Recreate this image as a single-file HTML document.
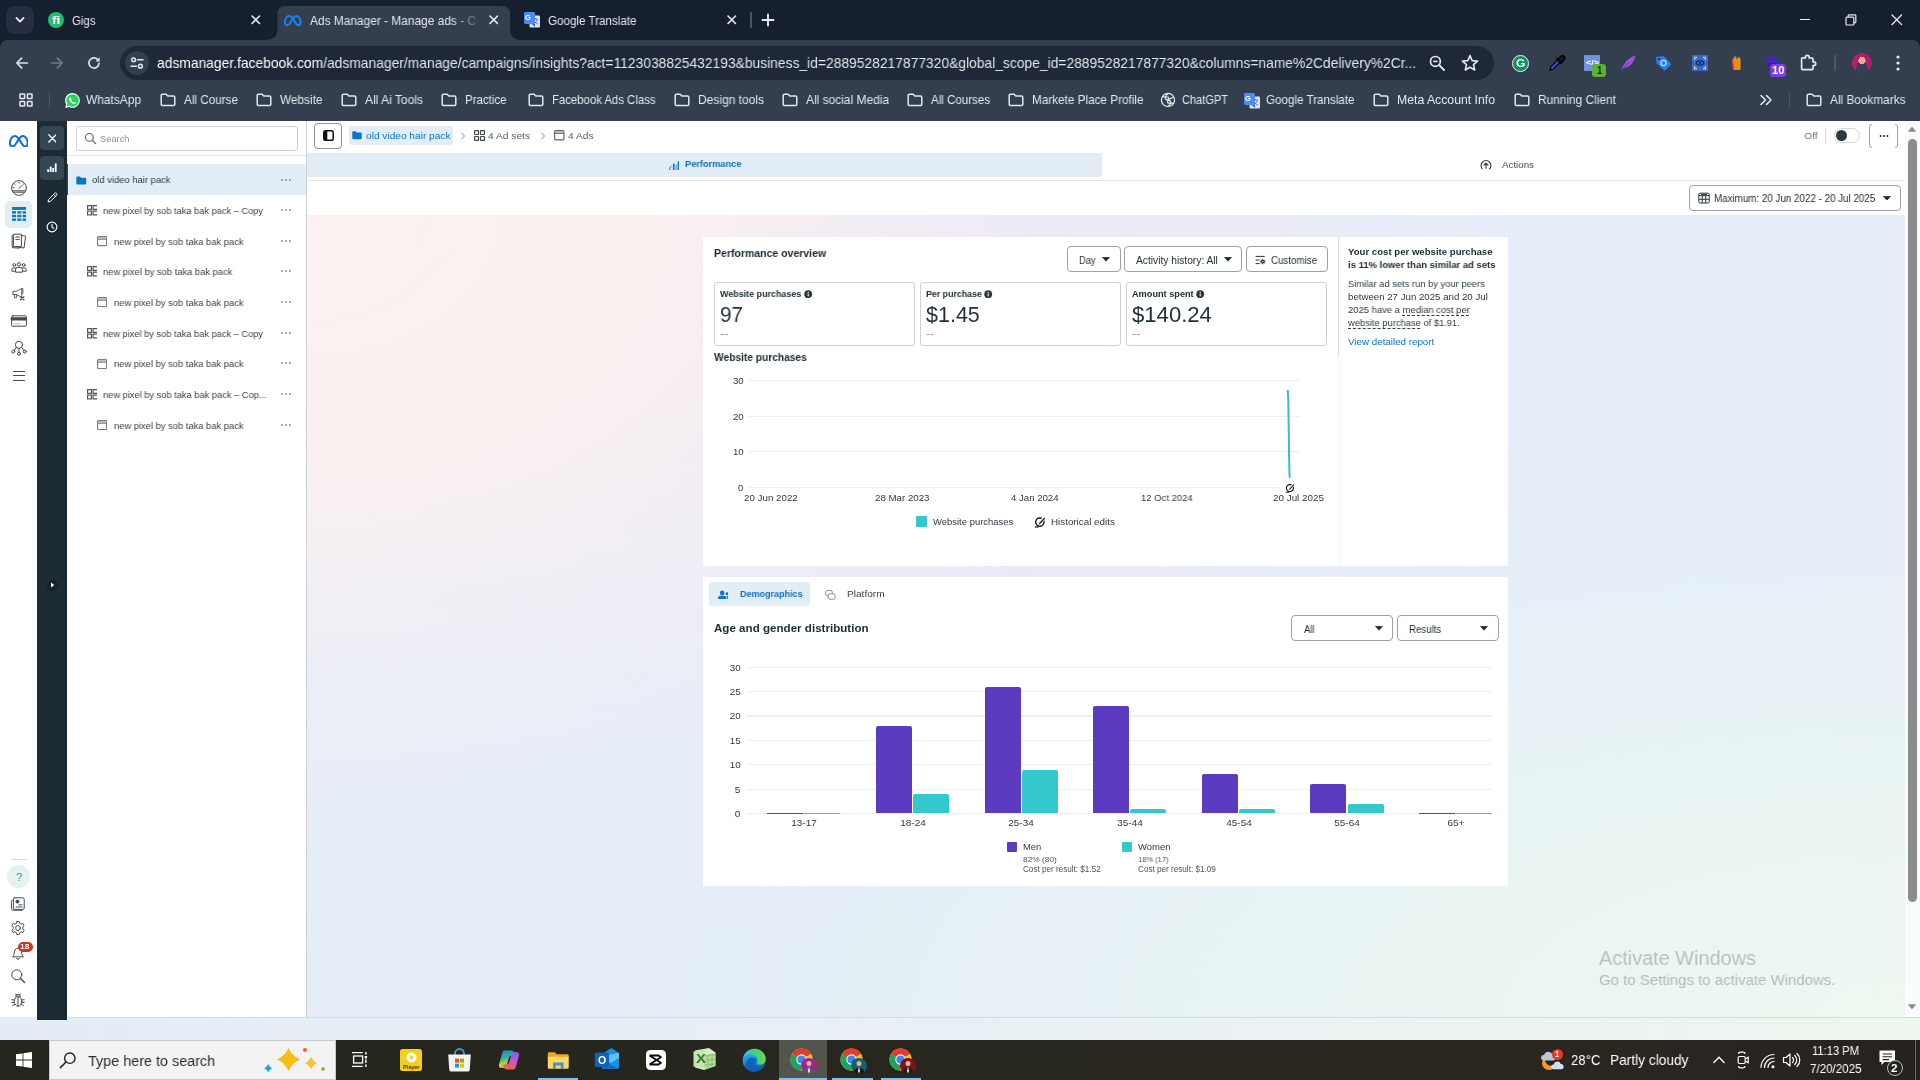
<!DOCTYPE html>
<html lang="en"><head><meta charset="utf-8"><title>Ads Manager - Manage ads - Campaigns</title>
<style>
html,body{margin:0;padding:0}
body{width:1920px;height:1080px;position:relative;overflow:hidden;background:#fff;font-family:"Liberation Sans",sans-serif;}
.a{position:absolute;box-sizing:border-box;display:block}
.t{position:absolute;white-space:nowrap;line-height:1;display:block;will-change:transform}
.seg{font-family:"Liberation Sans",sans-serif}
</style></head><body>
<div class="a" style="left:0px;top:0px;width:1920px;height:41px;background:#161f2f;"></div>
<div class="a" style="left:0px;top:40px;width:1920px;height:81px;background:#333e4e;"></div>
<div class="a" style="left:1912px;top:40px;width:8px;height:8px;background:radial-gradient(circle at 0 100%,#333e4e 7.600px,#161f2f 8.400px);"></div>
<div class="a" style="left:0px;top:40px;width:8px;height:8px;background:radial-gradient(circle at 100% 100%,#333e4e 7.600px,#161f2f 8.400px);"></div>
<div class="a" style="left:6px;top:6px;width:28px;height:28px;background:#262f41;border-radius:9px;"></div>
<svg class="a" style="left:14px;top:15px;" width="12" height="10" viewBox="0 0 12 10"><path d="M2.5,3 L6,6.6 L9.5,3" fill="none" stroke="#e6e8ec" stroke-width="1.8" stroke-linecap="round" stroke-linejoin="round"/></svg>
<div class="a" style="left:48px;top:12px;width:16px;height:16px;background:#1dbf73;border-radius:8px;"></div>
<span class="t" id="t0" style="left:51.5px;top:14.61px;font-size:11px;color:#fff;font-weight:700;transform:scaleX(1.2622);transform-origin:0 50%;">fi</span>
<span class="t" id="t1" style="left:72px;top:14.82px;font-size:12px;color:#e6e8ec;transform:scaleX(0.9519);transform-origin:0 50%;">Gigs</span>
<svg class="a" style="left:251.25px;top:15.25px;" width="9.5" height="9.5" viewBox="0 0 9.5 9.5"><path d="M1,1 L8.5,8.5 M8.5,1 L1,8.5" stroke="#e6e8ec" stroke-width="1.6" stroke-linecap="round" fill="none"/></svg>
<svg class="a" style="left:262px;top:0px;" width="264" height="41" viewBox="0 0 264 41"><path d="M2,41 L2,40 Q15.5,40 15.5,30 L15.5,14 Q15.5,6 23.5,6 L240,6 Q248,6 248,14 L248,30 Q248,40 261,40 L261,41 Z" fill="#333e4e"/></svg>
<svg class="a" style="left:284.25px;top:14.9px;" width="17.5" height="11.2" viewBox="0 0 20 12.800"><path d="M3.300,11.700 C1.600,11.700 1,10.200 1,8.400 C1,4.800 3,1.100 5.800,1.100 C8.100,1.100 9.500,3 11.100,5.700 L13.500,9.500 C14.600,11.200 15.500,11.700 16.700,11.700 C18.400,11.700 19,10.200 19,8.400 C19,4.800 17,1.100 14.300,1.100 C12.400,1.100 11,2.600 9.800,4.500 L6.500,9.700 C5.500,11.200 4.500,11.700 3.300,11.700 Z" fill="none" stroke="#1a80f5" stroke-width="2.2" stroke-linejoin="round"/></svg>
<span class="t" id="t2" style="left:310px;top:14.82px;font-size:12px;color:#e6e8ec;transform:scaleX(0.9915);transform-origin:0 50%;">Ads Manager - Manage ads - C</span>
<div class="a" style="left:452px;top:10px;width:28px;height:22px;background:linear-gradient(90deg,rgba(51,62,78,0),rgba(51,62,78,.92));"></div>
<svg class="a" style="left:488.75px;top:15.25px;" width="9.5" height="9.5" viewBox="0 0 9.5 9.5"><path d="M1,1 L8.5,8.5 M8.5,1 L1,8.5" stroke="#e6e8ec" stroke-width="1.6" stroke-linecap="round" fill="none"/></svg>
<svg class="a" style="left:523px;top:10.8px;" width="18" height="18" viewBox="0 0 18 18"><rect x="6.5" y="4.5" width="10.5" height="12" rx="1.2" fill="#dfe3ea"/><path d="M10,8 h5 M12.5,7 v1 M10.5,13 c2,-1 3.5,-3 4,-5 M11,9.5 c1,2 2.5,3 4,3.6" stroke="#5f6b80" stroke-width="0.9" fill="none"/><rect x="1" y="1" width="11" height="12" rx="1.4" fill="#4b8bf5"/><path d="M12,13 l-3.2,0 3.2,3 z" fill="#2a62c9"/></svg>
<span class="t" id="t3" style="left:525.4px;top:14.12px;font-size:7.5px;color:#fff;font-weight:700;transform:scaleX(0.9241);transform-origin:0 50%;">G</span>
<span class="t" id="t4" style="left:548px;top:14.82px;font-size:12px;color:#e6e8ec;transform:scaleX(0.9684);transform-origin:0 50%;">Google Translate</span>
<svg class="a" style="left:727.25px;top:15.25px;" width="9.5" height="9.5" viewBox="0 0 9.5 9.5"><path d="M1,1 L8.5,8.5 M8.5,1 L1,8.5" stroke="#e6e8ec" stroke-width="1.6" stroke-linecap="round" fill="none"/></svg>
<div class="a" style="left:750px;top:12px;width:1.5px;height:16px;background:#4a5266;"></div>
<svg class="a" style="left:761px;top:13px;" width="14" height="14" viewBox="0 0 14 14"><path d="M7,1.5 V12.5 M1.5,7 H12.5" stroke="#e6e8ec" stroke-width="1.9" stroke-linecap="round"/></svg>
<div class="a" style="left:1800px;top:18.8px;width:10px;height:1.2px;background:#e6e8ec;"></div>
<svg class="a" style="left:1845px;top:13.6px;" width="12" height="12" viewBox="0 0 12 12"><path d="M3.2,3 V1.6 a0.8,0.8 0 0 1 .8,-.8 H10 a0.8,0.8 0 0 1 .8,.8 V8 a0.8,0.8 0 0 1 -.8,.8 H9" fill="none" stroke="#e6e8ec" stroke-width="1.2"/><rect x="1" y="3.2" width="7.8" height="7.8" rx="1" fill="none" stroke="#e6e8ec" stroke-width="1.2"/></svg>
<svg class="a" style="left:1891.25px;top:14.25px;" width="11.5" height="11.5" viewBox="0 0 11.5 11.5"><path d="M1,1 L10.5,10.5 M10.5,1 L1,10.5" stroke="#e6e8ec" stroke-width="1.4" stroke-linecap="round" fill="none"/></svg>
<svg class="a" style="left:14px;top:55px;" width="16" height="16" viewBox="0 0 18 18"><path d="M15,9 H3.5 M8.6,3.6 L3.2,9 L8.6,14.4" fill="none" stroke="#dfe2e8" stroke-width="1.9" stroke-linecap="round" stroke-linejoin="round"/></svg>
<svg class="a" style="left:49px;top:55px;" width="16" height="16" viewBox="0 0 18 18"><path d="M3,9 H14.5 M9.4,3.6 L14.8,9 L9.4,14.4" fill="none" stroke="#70788a" stroke-width="1.9" stroke-linecap="round" stroke-linejoin="round"/></svg>
<svg class="a" style="left:86px;top:55px;" width="16" height="16" viewBox="0 0 18 18"><path d="M14.6,9.4 A5.7,5.7 0 1 1 12.9,4.9" fill="none" stroke="#dfe2e8" stroke-width="1.9" stroke-linecap="round"/><path d="M15.4,2.6 V7.2 H10.8 Z" fill="#dfe2e8"/></svg>
<div class="a" style="left:120px;top:46px;width:1373.5px;height:34px;background:#1e2838;border-radius:17px;"></div>
<div class="a" style="left:125px;top:51px;width:24px;height:24px;background:#333e4e;border-radius:12px;"></div>
<svg class="a" style="left:129px;top:55px;" width="16" height="16" viewBox="0 0 16 16"><circle cx="4.6" cy="4.8" r="1.9" fill="none" stroke="#e6e8ec" stroke-width="1.5"/><path d="M8.6,4.8 H14" stroke="#e6e8ec" stroke-width="1.5" stroke-linecap="round"/><circle cx="11.4" cy="11.2" r="1.9" fill="none" stroke="#e6e8ec" stroke-width="1.5"/><path d="M2,11.2 H7.4" stroke="#e6e8ec" stroke-width="1.5" stroke-linecap="round"/></svg>
<span class="t" id="t5" style="left:157px;top:56.39px;font-size:14.3px;color:#e2e5ea;transform:scaleX(0.9678);transform-origin:0 50%;"><span style="color:#fff">adsmanager.facebook.com</span>/adsmanager/manage/campaigns/insights?act=1123038825432193&amp;business_id=2889528217877320&amp;global_scope_id=2889528217877320&amp;columns=name%2Cdelivery%2Cr...</span>
<svg class="a" style="left:1428px;top:54px;" width="18" height="18" viewBox="0 0 18 18"><circle cx="7.4" cy="7.4" r="4.9" fill="none" stroke="#e6e8ec" stroke-width="1.7"/><path d="M11.2,11.2 L16,16" stroke="#e6e8ec" stroke-width="1.9" stroke-linecap="round"/><path d="M5.2,7.4 H9.6" stroke="#e6e8ec" stroke-width="1.5"/></svg>
<svg class="a" style="left:1460px;top:53px;" width="20" height="20" viewBox="0 0 20 20"><path d="M10,2.6 L12.2,7.6 L17.6,8.1 L13.5,11.7 L14.7,17 L10,14.2 L5.3,17 L6.5,11.7 L2.4,8.1 L7.8,7.6 Z" fill="none" stroke="#e6e8ec" stroke-width="1.6" stroke-linejoin="round"/></svg>
<div class="a" style="left:1512px;top:55px;width:16.5px;height:16.5px;background:#0f8c68;border:1.300px solid #e9f3ef;border-radius:8.5px;"></div>
<span class="t" id="t6" style="left:1515.6px;top:57.57px;font-size:11.5px;color:#fff;font-weight:700;transform:scaleX(1.0499);transform-origin:0 50%;">G</span>
<svg class="a" style="left:1547px;top:53px;" width="20" height="20" viewBox="0 0 20 20"><path d="M3,17 L4,13.6 L10.6,7 L13,9.4 L6.4,16 Z" fill="#4f49cc" stroke="#05070c" stroke-width="1.200"/><path d="M10,6 L14,10 M11,7 L14.6,3.4 a1.9,1.9 0 0 1 2.6,2.6 L13.6,9.6" stroke="#05070c" stroke-width="2.6" stroke-linecap="round" fill="none"/></svg>
<div class="a" style="left:1584px;top:55px;width:16px;height:16px;background:#6f93dc;border-radius:1px;"></div>
<span class="t" id="t7" style="left:1585.5px;top:58.58px;font-size:8px;color:#fff;font-weight:700;transform:scaleX(1.1228);transform-origin:0 50%;">&lt;/&gt;</span>
<div class="a" style="left:1592px;top:63.5px;width:14px;height:13px;background:#5db234;border-radius:3px;"></div>
<span class="t" id="t8" style="left:1596.6px;top:65.6px;font-size:10px;color:#10210a;font-weight:700;transform:scaleX(0.8989);transform-origin:0 50%;">1</span>
<svg class="a" style="left:1618px;top:53px;" width="20" height="20" viewBox="0 0 20 20"><path d="M3,17.5 C6,10 10,4.5 17.5,2.5 C16.5,9 12,14 5,15.5 Z" fill="#9a55d6"/><path d="M3,17.5 L11,9" stroke="#6e2fb0" stroke-width="1"/></svg>
<svg class="a" style="left:1653px;top:53px;" width="20" height="20" viewBox="0 0 20 20"><path d="M3,4 L10.5,3 L17.5,10 a1.4,1.4 0 0 1 0,2 L12.5,17 a1.4,1.4 0 0 1 -2,0 L3.5,10 Z" fill="#2d7df0"/><circle cx="10.5" cy="10" r="2.6" fill="none" stroke="#bcd6ff" stroke-width="1.3"/><circle cx="6" cy="6" r="1.1" fill="#12243d"/></svg>
<div class="a" style="left:1692px;top:55px;width:16px;height:16px;background:#3468d8;"></div>
<svg class="a" style="left:1692px;top:55px;" width="16" height="16" viewBox="0 0 16 16"><path d="M2.5,5 V2.5 H5 M11,2.5 H13.5 V5 M13.5,11 V13.5 H11 M5,13.5 H2.5 V11" stroke="#f0c84a" stroke-width="1.3" fill="none"/><ellipse cx="8" cy="8" rx="3.6" ry="2.2" fill="none" stroke="#15254d" stroke-width="1.1"/><circle cx="8" cy="8" r="1" fill="#15254d"/></svg>
<svg class="a" style="left:1727px;top:53px;" width="20" height="20" viewBox="0 0 20 20"><path d="M6,6 L8,3 L10,6 L12,3.4 L13.6,6 V16 a1,1 0 0 1 -1,1 H7 a1,1 0 0 1 -1,-1 Z" fill="#f08a1c"/><path d="M5.4,6.5 L6.6,16.5" stroke="#c8482a" stroke-width="1.6"/><path d="M8,3 L10,6" stroke="#5aa02c" stroke-width="1.2"/></svg>
<svg class="a" style="left:1762.5px;top:55px;" width="18" height="13" viewBox="0 0 18 13"><path d="M1,5.500 L9,1 L17,5.500 L9,10 Z" fill="#4a22c4"/><path d="M4,8 V11 L9,12.800 L14,11 V8" fill="#3b1ba6"/></svg>
<div class="a" style="left:1769.5px;top:63.5px;width:16.5px;height:13px;background:#7a3fe0;border-radius:3px;"></div>
<span class="t" id="t9" style="left:1771.6px;top:65.6px;font-size:10px;color:#fff;font-weight:700;transform:scaleX(1.1146);transform-origin:0 50%;">10</span>
<svg class="a" style="left:1798px;top:53px;" width="20" height="20" viewBox="0 0 20 20"><path d="M7.4,4.2 a1.9,1.9 0 0 1 3.8,0 V5 H14 a1,1 0 0 1 1,1 V8.8 H15.8 a1.9,1.9 0 0 1 0,3.8 H15 V15.6 a1,1 0 0 1 -1,1 H4.6 a1,1 0 0 1 -1,-1 V5.9 a1,1 0 0 1 1,-1 H7.4 Z" fill="none" stroke="#e6e8ec" stroke-width="1.7" stroke-linejoin="round"/></svg>
<div class="a" style="left:1834.3px;top:55px;width:1.3px;height:16px;background:#4e5668;"></div>
<div class="a" style="left:1852px;top:53px;width:20px;height:20px;background:radial-gradient(circle at 50% 38%,#e8b08a 0 22%,rgba(0,0,0,0) 23%),radial-gradient(ellipse at 50% 105%,#3a3f58 0 45%,rgba(0,0,0,0) 46%),#b01f74;border-radius:10px;"></div>
<svg class="a" style="left:1894px;top:53px;" width="8" height="20" viewBox="0 0 8 20"><circle cx="4" cy="4" r="1.6" fill="#e6e8ec"/><circle cx="4" cy="10" r="1.6" fill="#e6e8ec"/><circle cx="4" cy="16" r="1.6" fill="#e6e8ec"/></svg>
<svg class="a" style="left:19px;top:93px;" width="14" height="14" viewBox="0 0 14 14"><g fill="none" stroke="#e6e8ec" stroke-width="1.5"><rect x="1" y="1" width="4.6" height="4.6" rx=".6"/><rect x="8.4" y="1" width="4.6" height="4.6" rx=".6"/><rect x="1" y="8.4" width="4.6" height="4.6" rx=".6"/><rect x="8.4" y="8.4" width="4.6" height="4.6" rx=".6"/></g></svg>
<div class="a" style="left:48.5px;top:92px;width:1.3px;height:16px;background:#4e5668;"></div>
<svg class="a" style="left:63.5px;top:91.5px;" width="17" height="17" viewBox="0 0 17 17"><path d="M8.6,1 a7.4,7.4 0 0 0 -6.4,11.2 L1.2,16 L5.1,15 A7.4,7.4 0 1 0 8.6,1 Z" fill="#fff"/><path d="M8.6,2.2 a6.2,6.2 0 0 0 -5.2,9.6 L2.8,14.3 L5.4,13.7 A6.2,6.2 0 1 0 8.6,2.2 Z" fill="#25d366"/><path d="M6.2,5.2 c-.5,0 -1.1,.8 -1,1.7 c.3,2.4 2.7,4.6 5,5 c.9,.1 1.7,-.5 1.7,-1.100 l-1.700,-.9 l-.7,.7 c-1,-.4 -2,-1.400 -2.400,-2.400 l.7,-.7 Z" fill="#fff"/></svg>
<span class="t" id="t10" style="left:86px;top:93.92px;font-size:12.2px;color:#e6e8ec;transform:scaleX(0.9780);transform-origin:0 50%;">WhatsApp</span>
<svg class="a" style="left:160px;top:93px;" width="16" height="14" viewBox="0 0 16 14"><path d="M1.2,2.6 a1.4,1.4 0 0 1 1.4,-1.4 h3.6 l1.6,1.7 h5.6 a1.4,1.4 0 0 1 1.4,1.4 v6.9 a1.4,1.4 0 0 1 -1.4,1.4 h-10.8 a1.4,1.4 0 0 1 -1.4,-1.4 z" fill="none" stroke="#e6e8ec" stroke-width="1.5" stroke-linejoin="round"/></svg>
<span class="t" id="t11" style="left:184px;top:93.92px;font-size:12.2px;color:#e6e8ec;transform:scaleX(0.9605);transform-origin:0 50%;">All Course</span>
<svg class="a" style="left:256px;top:93px;" width="16" height="14" viewBox="0 0 16 14"><path d="M1.2,2.6 a1.4,1.4 0 0 1 1.4,-1.4 h3.6 l1.6,1.7 h5.6 a1.4,1.4 0 0 1 1.4,1.4 v6.9 a1.4,1.4 0 0 1 -1.4,1.4 h-10.8 a1.4,1.4 0 0 1 -1.4,-1.4 z" fill="none" stroke="#e6e8ec" stroke-width="1.5" stroke-linejoin="round"/></svg>
<span class="t" id="t12" style="left:280px;top:93.92px;font-size:12.2px;color:#e6e8ec;transform:scaleX(0.9700);transform-origin:0 50%;">Website</span>
<svg class="a" style="left:341px;top:93px;" width="16" height="14" viewBox="0 0 16 14"><path d="M1.2,2.6 a1.4,1.4 0 0 1 1.4,-1.4 h3.6 l1.6,1.7 h5.6 a1.4,1.4 0 0 1 1.4,1.4 v6.9 a1.4,1.4 0 0 1 -1.4,1.4 h-10.8 a1.4,1.4 0 0 1 -1.4,-1.4 z" fill="none" stroke="#e6e8ec" stroke-width="1.5" stroke-linejoin="round"/></svg>
<span class="t" id="t13" style="left:365px;top:93.92px;font-size:12.2px;color:#e6e8ec;transform:scaleX(0.9878);transform-origin:0 50%;">All Ai Tools</span>
<svg class="a" style="left:441px;top:93px;" width="16" height="14" viewBox="0 0 16 14"><path d="M1.2,2.6 a1.4,1.4 0 0 1 1.4,-1.4 h3.6 l1.6,1.7 h5.6 a1.4,1.4 0 0 1 1.4,1.4 v6.9 a1.4,1.4 0 0 1 -1.4,1.4 h-10.8 a1.4,1.4 0 0 1 -1.4,-1.4 z" fill="none" stroke="#e6e8ec" stroke-width="1.5" stroke-linejoin="round"/></svg>
<span class="t" id="t14" style="left:465px;top:93.92px;font-size:12.2px;color:#e6e8ec;transform:scaleX(0.9425);transform-origin:0 50%;">Practice</span>
<svg class="a" style="left:528px;top:93px;" width="16" height="14" viewBox="0 0 16 14"><path d="M1.2,2.6 a1.4,1.4 0 0 1 1.4,-1.4 h3.6 l1.6,1.7 h5.6 a1.4,1.4 0 0 1 1.4,1.4 v6.9 a1.4,1.4 0 0 1 -1.4,1.4 h-10.8 a1.4,1.4 0 0 1 -1.4,-1.4 z" fill="none" stroke="#e6e8ec" stroke-width="1.5" stroke-linejoin="round"/></svg>
<span class="t" id="t15" style="left:552px;top:93.92px;font-size:12.2px;color:#e6e8ec;transform:scaleX(0.9315);transform-origin:0 50%;">Facebook Ads Class</span>
<svg class="a" style="left:674px;top:93px;" width="16" height="14" viewBox="0 0 16 14"><path d="M1.2,2.6 a1.4,1.4 0 0 1 1.4,-1.4 h3.6 l1.6,1.7 h5.6 a1.4,1.4 0 0 1 1.4,1.4 v6.9 a1.4,1.4 0 0 1 -1.4,1.4 h-10.8 a1.4,1.4 0 0 1 -1.4,-1.4 z" fill="none" stroke="#e6e8ec" stroke-width="1.5" stroke-linejoin="round"/></svg>
<span class="t" id="t16" style="left:698px;top:93.92px;font-size:12.2px;color:#e6e8ec;transform:scaleX(0.9839);transform-origin:0 50%;">Design tools</span>
<svg class="a" style="left:782px;top:93px;" width="16" height="14" viewBox="0 0 16 14"><path d="M1.2,2.6 a1.4,1.4 0 0 1 1.4,-1.4 h3.6 l1.6,1.7 h5.6 a1.4,1.4 0 0 1 1.4,1.4 v6.9 a1.4,1.4 0 0 1 -1.4,1.4 h-10.8 a1.4,1.4 0 0 1 -1.4,-1.4 z" fill="none" stroke="#e6e8ec" stroke-width="1.5" stroke-linejoin="round"/></svg>
<span class="t" id="t17" style="left:806px;top:93.92px;font-size:12.2px;color:#e6e8ec;transform:scaleX(0.9803);transform-origin:0 50%;">All social Media</span>
<svg class="a" style="left:907px;top:93px;" width="16" height="14" viewBox="0 0 16 14"><path d="M1.2,2.6 a1.4,1.4 0 0 1 1.4,-1.4 h3.6 l1.6,1.7 h5.6 a1.4,1.4 0 0 1 1.4,1.4 v6.9 a1.4,1.4 0 0 1 -1.4,1.4 h-10.8 a1.4,1.4 0 0 1 -1.4,-1.4 z" fill="none" stroke="#e6e8ec" stroke-width="1.5" stroke-linejoin="round"/></svg>
<span class="t" id="t18" style="left:931px;top:93.92px;font-size:12.2px;color:#e6e8ec;transform:scaleX(0.9468);transform-origin:0 50%;">All Courses</span>
<svg class="a" style="left:1008px;top:93px;" width="16" height="14" viewBox="0 0 16 14"><path d="M1.2,2.6 a1.4,1.4 0 0 1 1.4,-1.4 h3.6 l1.6,1.7 h5.6 a1.4,1.4 0 0 1 1.4,1.4 v6.9 a1.4,1.4 0 0 1 -1.4,1.4 h-10.8 a1.4,1.4 0 0 1 -1.4,-1.4 z" fill="none" stroke="#e6e8ec" stroke-width="1.5" stroke-linejoin="round"/></svg>
<span class="t" id="t19" style="left:1032px;top:93.92px;font-size:12.2px;color:#e6e8ec;transform:scaleX(0.9625);transform-origin:0 50%;">Markete Place Profile</span>
<svg class="a" style="left:1373px;top:93px;" width="16" height="14" viewBox="0 0 16 14"><path d="M1.2,2.6 a1.4,1.4 0 0 1 1.4,-1.4 h3.6 l1.6,1.7 h5.6 a1.4,1.4 0 0 1 1.4,1.4 v6.9 a1.4,1.4 0 0 1 -1.4,1.4 h-10.8 a1.4,1.4 0 0 1 -1.4,-1.4 z" fill="none" stroke="#e6e8ec" stroke-width="1.5" stroke-linejoin="round"/></svg>
<span class="t" id="t20" style="left:1397px;top:93.92px;font-size:12.2px;color:#e6e8ec;transform:scaleX(1.0045);transform-origin:0 50%;">Meta Account Info</span>
<svg class="a" style="left:1514px;top:93px;" width="16" height="14" viewBox="0 0 16 14"><path d="M1.2,2.6 a1.4,1.4 0 0 1 1.4,-1.4 h3.6 l1.6,1.7 h5.6 a1.4,1.4 0 0 1 1.4,1.4 v6.9 a1.4,1.4 0 0 1 -1.4,1.4 h-10.8 a1.4,1.4 0 0 1 -1.4,-1.4 z" fill="none" stroke="#e6e8ec" stroke-width="1.5" stroke-linejoin="round"/></svg>
<span class="t" id="t21" style="left:1538px;top:93.92px;font-size:12.2px;color:#e6e8ec;transform:scaleX(0.9756);transform-origin:0 50%;">Running Client</span>
<svg class="a" style="left:1806px;top:93px;" width="16" height="14" viewBox="0 0 16 14"><path d="M1.2,2.6 a1.4,1.4 0 0 1 1.4,-1.4 h3.6 l1.6,1.7 h5.6 a1.4,1.4 0 0 1 1.4,1.4 v6.9 a1.4,1.4 0 0 1 -1.4,1.4 h-10.8 a1.4,1.4 0 0 1 -1.4,-1.4 z" fill="none" stroke="#e6e8ec" stroke-width="1.5" stroke-linejoin="round"/></svg>
<span class="t" id="t22" style="left:1830px;top:93.92px;font-size:12.2px;color:#e6e8ec;transform:scaleX(0.9693);transform-origin:0 50%;">All Bookmarks</span>
<svg class="a" style="left:1160px;top:92px;" width="16" height="16" viewBox="0 0 16 16"><g fill="none" stroke="#e6e8ec" stroke-width="1.25"><circle cx="8" cy="8" r="6.6"/><path d="M8,1.4 C4.500,4 4.500,8 8,8 C11.500,8 11.500,12 8,14.600 M2.300,4.700 C6.300,5.300 9.800,3.300 8,8 C6.200,12.700 9.700,10.700 13.700,11.300 M13.700,4.700 C11.200,7.900 7.700,5.900 8,8"/></g></svg>
<span class="t" id="t23" style="left:1182px;top:93.92px;font-size:12.2px;color:#e6e8ec;transform:scaleX(0.9053);transform-origin:0 50%;">ChatGPT</span>
<svg class="a" style="left:1243px;top:91.5px;" width="18" height="18" viewBox="0 0 18 18"><rect x="6.5" y="4.5" width="10.5" height="12" rx="1.2" fill="#dfe3ea"/><path d="M10,8 h5 M12.5,7 v1 M10.5,13 c2,-1 3.5,-3 4,-5 M11,9.5 c1,2 2.5,3 4,3.6" stroke="#5f6b80" stroke-width="0.9" fill="none"/><rect x="1" y="1" width="11" height="12" rx="1.4" fill="#4b8bf5"/><path d="M12,13 l-3.2,0 3.2,3 z" fill="#2a62c9"/></svg>
<span class="t" id="t24" style="left:1245.4px;top:94.83px;font-size:7.5px;color:#fff;font-weight:700;transform:scaleX(0.9241);transform-origin:0 50%;">G</span>
<span class="t" id="t25" style="left:1266px;top:93.92px;font-size:12.2px;color:#e6e8ec;transform:scaleX(0.9534);transform-origin:0 50%;">Google Translate</span>
<svg class="a" style="left:1759px;top:94px;" width="14" height="12" viewBox="0 0 14 12"><path d="M2,1.5 L6.500,6 L2,10.500 M7.500,1.500 L12,6 L7.500,10.500" fill="none" stroke="#e6e8ec" stroke-width="1.6" stroke-linecap="round" stroke-linejoin="round"/></svg>
<div class="a" style="left:1788.5px;top:92px;width:1.3px;height:16px;background:#4e5668;"></div>
<div class="a" style="left:307px;top:215px;width:1598px;height:802px;background:radial-gradient(ellipse 860px 640px at 0% 0%,rgba(251,241,240,1) 0%,rgba(250,240,240,1) 40%,rgba(248,239,242,.5) 64%,rgba(246,238,245,0) 100%),radial-gradient(ellipse 620px 470px at 40% 16%,rgba(237,232,245,1) 0%,rgba(236,233,246,.8) 45%,rgba(235,234,247,0) 100%),radial-gradient(ellipse 1500px 600px at 100% 100%,rgba(237,248,241,1) 0%,rgba(234,246,242,.85) 35%,rgba(231,242,245,.5) 65%,rgba(230,240,247,0) 100%),linear-gradient(180deg,#e7eef9 0%,#e4edf8 100%);"></div>
<div class="a" style="left:1905px;top:121px;width:15px;height:896px;background:#fafbfc;"></div>
<svg class="a" style="left:1907px;top:126px;" width="10" height="7" viewBox="0 0 10 7"><path d="M5,.8 L9.400,5.800 H.6 Z" fill="#8b8b8b"/></svg>
<svg class="a" style="left:1907px;top:1003px;" width="10" height="7" viewBox="0 0 10 7"><path d="M5,6.200 L9.400,1.200 H.6 Z" fill="#8b8b8b"/></svg>
<div class="a" style="left:1908px;top:139px;width:9px;height:763px;background:#8c8c8c;border-radius:4.5px;"></div>
<div class="a" style="left:0px;top:1017px;width:1920px;height:23px;background:linear-gradient(90deg,#e4edf6 0%,#e6f0f5 45%,#ecf7ef 100%);"></div>
<div class="a" style="left:67px;top:1017px;width:1853px;height:1px;background:#d5dbe0;"></div>
<div class="a" style="left:37px;top:1017px;width:30px;height:2.5px;background:#1c2b33;"></div>
<span class="t" id="t26" style="left:1599px;top:948.16px;font-size:20.5px;color:#b6bfc2;transform:scaleX(0.9704);transform-origin:0 50%;">Activate Windows</span>
<span class="t" id="t27" style="left:1599px;top:972.36px;font-size:15.5px;color:#b2bbbe;transform:scaleX(0.9666);transform-origin:0 50%;">Go to Settings to activate Windows.</span>
<div class="a" style="left:703px;top:237px;width:635px;height:328.5px;background:#fff;"></div>
<div class="a" style="left:1338px;top:237px;width:170px;height:328.5px;background:linear-gradient(90deg,#f7f9fb 0,#fff 8px);"></div>
<div class="a" style="left:1338px;top:237px;width:1px;height:118.5px;background:#d9dee2;"></div>
<span class="t" id="t28" style="left:714.2px;top:247.69px;font-size:10.94px;color:#1c2b33;font-weight:700;transform:scaleX(0.9603);transform-origin:0 50%;">Performance overview</span>
<div class="a" style="left:1067px;top:246px;width:53.5px;height:26px;background:#fff;border:1px solid #9aa2a8;border-radius:4px;"></div>
<span class="t" id="t29" style="left:1079px;top:255.58px;font-size:10.24px;color:#1c2b33;transform:scaleX(0.9064);transform-origin:0 50%;">Day</span>
<svg class="a" style="left:1102.3px;top:257.3px;" width="8" height="4.6" viewBox="0 0 8 4.6"><path d="M.4,.3 H7.6 L4,4.3 Z" fill="#1c2b33" stroke="#1c2b33" stroke-width=".6" stroke-linejoin="round"/></svg>
<div class="a" style="left:1124px;top:246px;width:118px;height:26px;background:#fff;border:1px solid #9aa2a8;border-radius:4px;"></div>
<span class="t" id="t30" style="left:1136px;top:255.58px;font-size:10.24px;color:#1c2b33;transform:scaleX(0.9950);transform-origin:0 50%;">Activity history: All</span>
<svg class="a" style="left:1224px;top:257.3px;" width="8" height="4.6" viewBox="0 0 8 4.6"><path d="M.4,.3 H7.6 L4,4.3 Z" fill="#1c2b33" stroke="#1c2b33" stroke-width=".6" stroke-linejoin="round"/></svg>
<div class="a" style="left:1246px;top:246px;width:82px;height:26px;background:#fff;border:1px solid #9aa2a8;border-radius:4px;"></div>
<svg class="a" style="left:1255px;top:254.9px;" width="11" height="10" viewBox="0 0 11 10"><path d="M.6,1.400 H9.800 M.6,5 H4.600 M.6,8.600 H4.600" stroke="#2b363d" stroke-width="1" fill="none"/><circle cx="7.800" cy="6.600" r="1.900" fill="#2b363d"/><path d="M7.800,3.800 V9.400 M5,6.600 H10.600 M5.800,4.600 L9.800,8.600 M9.800,4.600 L5.800,8.600" stroke="#2b363d" stroke-width=".8"/><circle cx="7.800" cy="6.600" r=".7" fill="#fff"/></svg>
<span class="t" id="t31" style="left:1271px;top:255.58px;font-size:10.24px;color:#1c2b33;transform:scaleX(0.9515);transform-origin:0 50%;">Customise</span>
<div class="a" style="left:714px;top:282px;width:200.5px;height:64px;background:#fff;border:1px solid #ccd2d6;border-radius:3px;"></div>
<span class="t" id="t32" style="left:719.7px;top:289.7px;font-size:9.19px;color:#1c2b33;font-weight:700;transform:scaleX(0.9744);transform-origin:0 50%;">Website purchases</span>
<svg class="a" style="left:803.8px;top:289.9px;" width="8.4" height="8.4" viewBox="0 0 8.4 8.4"><circle cx="4.200" cy="4.200" r="3.900" fill="#2a353c"/><rect x="3.650" y="3.600" width="1.100" height="2.700" fill="#fff"/><circle cx="4.200" cy="2.400" r=".65" fill="#fff"/></svg>
<span class="t" id="t33" style="left:719.6px;top:304.71px;font-size:21.5px;color:#23323a;transform:scaleX(0.9573);transform-origin:0 50%;">97</span>
<span class="t" id="t34" style="left:719.6px;top:329.71px;font-size:8.75px;color:#7b858c;transform:scaleX(1.4413);transform-origin:0 50%;">--</span>
<div class="a" style="left:920px;top:282px;width:200.5px;height:64px;background:#fff;border:1px solid #ccd2d6;border-radius:3px;"></div>
<span class="t" id="t35" style="left:925.7px;top:289.7px;font-size:9.19px;color:#1c2b33;font-weight:700;transform:scaleX(0.9600);transform-origin:0 50%;">Per purchase</span>
<svg class="a" style="left:984.3px;top:289.9px;" width="8.4" height="8.4" viewBox="0 0 8.4 8.4"><circle cx="4.200" cy="4.200" r="3.900" fill="#2a353c"/><rect x="3.650" y="3.600" width="1.100" height="2.700" fill="#fff"/><circle cx="4.200" cy="2.400" r=".65" fill="#fff"/></svg>
<span class="t" id="t36" style="left:925.6px;top:304.71px;font-size:21.5px;color:#23323a;transform:scaleX(0.9979);transform-origin:0 50%;">$1.45</span>
<span class="t" id="t37" style="left:925.6px;top:329.71px;font-size:8.75px;color:#7b858c;transform:scaleX(1.4413);transform-origin:0 50%;">--</span>
<div class="a" style="left:1126px;top:282px;width:201px;height:64px;background:#fff;border:1px solid #ccd2d6;border-radius:3px;"></div>
<span class="t" id="t38" style="left:1131.7px;top:289.7px;font-size:9.19px;color:#1c2b33;font-weight:700;transform:scaleX(0.9991);transform-origin:0 50%;">Amount spent</span>
<svg class="a" style="left:1196.1px;top:289.9px;" width="8.4" height="8.4" viewBox="0 0 8.4 8.4"><circle cx="4.200" cy="4.200" r="3.900" fill="#2a353c"/><rect x="3.650" y="3.600" width="1.100" height="2.700" fill="#fff"/><circle cx="4.200" cy="2.400" r=".65" fill="#fff"/></svg>
<span class="t" id="t39" style="left:1131.6px;top:304.71px;font-size:21.5px;color:#23323a;transform:scaleX(1.0281);transform-origin:0 50%;">$140.24</span>
<span class="t" id="t40" style="left:1131.6px;top:329.71px;font-size:8.75px;color:#7b858c;transform:scaleX(1.4413);transform-origin:0 50%;">--</span>
<span class="t" id="t41" style="left:714.2px;top:351.64px;font-size:10.94px;color:#1c2b33;font-weight:700;transform:scaleX(0.9327);transform-origin:0 50%;">Website purchases</span>
<div class="a" style="left:748px;top:380px;width:552px;height:1.1px;background:#edeef0;"></div>
<span class="t" id="t42" style="right:1176.2px;top:376.19px;font-size:9.62px;color:#2f3a41;transform:scaleX(1.0091);transform-origin:100% 50%;">30</span>
<div class="a" style="left:748px;top:415.8px;width:552px;height:1.1px;background:#edeef0;"></div>
<span class="t" id="t43" style="right:1176.2px;top:411.99px;font-size:9.62px;color:#2f3a41;transform:scaleX(1.0091);transform-origin:100% 50%;">20</span>
<div class="a" style="left:748px;top:451.3px;width:552px;height:1.1px;background:#edeef0;"></div>
<span class="t" id="t44" style="right:1176.2px;top:447.49px;font-size:9.62px;color:#2f3a41;transform:scaleX(1.0091);transform-origin:100% 50%;">10</span>
<div class="a" style="left:748px;top:487px;width:552px;height:1.1px;background:#edeef0;"></div>
<span class="t" id="t45" style="right:1176.2px;top:483.19px;font-size:9.62px;color:#2f3a41;transform:scaleX(0.9889);transform-origin:100% 50%;">0</span>
<svg class="a" style="left:1284px;top:386px;" width="10" height="96" viewBox="0 0 10 96"><path d="M3.800,4.800 L4.300,14 L4.700,40 L5.100,70 L5.400,86 L5.700,91" fill="none" stroke="#3bbcc6" stroke-width="2" stroke-linejoin="round" stroke-linecap="round"/></svg>
<div class="a" style="left:1281px;top:486px;width:19px;height:3px;background:#fff;"></div>
<svg class="a" style="left:1284.5px;top:482.8px;" width="10" height="10" viewBox="0 0 11.500 11"><circle cx="5.600" cy="5.600" r="4" fill="none" stroke="#111" stroke-width="1.350"/><path d="M11,.4 L4.200,7.600" stroke="#fff" stroke-width="3" fill="none"/><path d="M9.900,1.300 L5,6.500 L4.400,7.900 L5.800,7.300 L10.600,2.100 Z" fill="#111"/><path d="M.8,10.300 H4.400" stroke="#111" stroke-width="1.100"/></svg>
<span class="t" id="t46" style="left:743.7px;top:492.89px;font-size:9.62px;color:#2f3a41;transform:scaleX(1.0169);transform-origin:0 50%;">20 Jun 2022</span>
<span class="t" id="t47" style="left:875px;top:492.89px;font-size:9.62px;color:#2f3a41;transform:scaleX(1.0098);transform-origin:0 50%;">28 Mar 2023</span>
<span class="t" id="t48" style="left:1010.8px;top:492.89px;font-size:9.62px;color:#2f3a41;transform:scaleX(0.9987);transform-origin:0 50%;">4 Jan 2024</span>
<span class="t" id="t49" style="left:1140.8px;top:492.89px;font-size:9.62px;color:#2f3a41;transform:scaleX(0.9874);transform-origin:0 50%;">12 Oct 2024</span>
<span class="t" id="t50" style="left:1272.8px;top:492.89px;font-size:9.62px;color:#2f3a41;transform:scaleX(1.0261);transform-origin:0 50%;">20 Jul 2025</span>
<div class="a" style="left:916px;top:516px;width:11px;height:11px;background:#33c8cc;border-radius:1px;"></div>
<span class="t" id="t51" style="left:932.5px;top:517.5px;font-size:9.19px;color:#2f3a41;transform:scaleX(1.0316);transform-origin:0 50%;">Website purchases</span>
<svg class="a" style="left:1033.5px;top:515.8px;" width="12" height="12" viewBox="0 0 11.500 11"><circle cx="5.600" cy="5.600" r="4" fill="none" stroke="#111" stroke-width="1.350"/><path d="M11,.4 L4.200,7.600" stroke="#fff" stroke-width="3" fill="none"/><path d="M9.900,1.300 L5,6.500 L4.400,7.900 L5.800,7.300 L10.600,2.100 Z" fill="#111"/><path d="M.8,10.300 H4.400" stroke="#111" stroke-width="1.100"/></svg>
<span class="t" id="t52" style="left:1050.5px;top:517.5px;font-size:9.19px;color:#2f3a41;transform:scaleX(1.0697);transform-origin:0 50%;">Historical edits</span>
<span class="t" id="t53" style="left:1347.5px;top:246.79px;font-size:9.62px;color:#1c2b33;font-weight:700;transform:scaleX(0.9997);transform-origin:0 50%;">Your cost per website purchase</span>
<span class="t" id="t54" style="left:1347.5px;top:260.09px;font-size:9.62px;color:#1c2b33;font-weight:700;transform:scaleX(0.9863);transform-origin:0 50%;">is 11% lower than similar ad sets</span>
<span class="t" id="t55" style="left:1347.5px;top:278.99px;font-size:9.62px;color:#2c3941;transform:scaleX(0.9739);transform-origin:0 50%;">Similar ad sets run by your peers</span>
<span class="t" id="t56" style="left:1347.5px;top:291.99px;font-size:9.62px;color:#2c3941;transform:scaleX(1.0063);transform-origin:0 50%;">between 27 Jun 2025 and 20 Jul</span>
<span class="t" id="t57" style="left:1347.5px;top:304.99px;font-size:9.62px;color:#2c3941;transform:scaleX(0.9826);transform-origin:0 50%;">2025 have a <span style="text-decoration:underline dashed;text-decoration-thickness:1px;text-underline-offset:2px">median cost per</span></span>
<span class="t" id="t58" style="left:1347.5px;top:318.29px;font-size:9.62px;color:#2c3941;transform:scaleX(0.9732);transform-origin:0 50%;"><span style="text-decoration:underline dashed;text-decoration-thickness:1px;text-underline-offset:2px">website purchase</span> of $1.91.</span>
<span class="t" id="t59" style="left:1347.5px;top:336.79px;font-size:9.62px;color:#1272b8;transform:scaleX(1.0181);transform-origin:0 50%;">View detailed report</span>
<div class="a" style="left:703px;top:577px;width:805px;height:308.7px;background:#fff;"></div>
<div class="a" style="left:709px;top:582px;width:101px;height:24px;background:#e2edf6;border-radius:4px;"></div>
<svg class="a" style="left:717.7px;top:590.2px;" width="10.5" height="9.2" viewBox="0 0 10.5 9.2"><g fill="#1272c4"><circle cx="4.200" cy="2.900" r="2.300"/><path d="M0,9.800 V8.400 a2.600,2.600 0 0 1 2.600,-2.600 h3.200 a2.600,2.600 0 0 1 2.600,2.600 V9.800 Z"/><circle cx="9" cy="3.800" r="1.500"/><path d="M9.200,9.800 V8.200 a3.400,3.400 0 0 0 -.8,-2.200 h.9 a2.100,2.100 0 0 1 2.100,2.100 V9.800 Z"/></g></svg>
<span class="t" id="t60" style="left:739.5px;top:589.19px;font-size:9.62px;color:#1272b8;font-weight:700;transform:scaleX(0.9363);transform-origin:0 50%;">Demographics</span>
<svg class="a" style="left:825px;top:589.2px;" width="11" height="11" viewBox="0 0 11 11"><g fill="none" stroke="#79838a" stroke-width=".9"><rect x=".6" y="1.400" width="6.800" height="5.400" rx="2.200"/><rect x="3.200" y="4.800" width="7" height="5.400" rx="1.800" fill="#fff"/></g></svg>
<span class="t" id="t61" style="left:846.7px;top:589.19px;font-size:9.62px;color:#333e45;transform:scaleX(1.0508);transform-origin:0 50%;">Platform</span>
<span class="t" id="t62" style="left:714.2px;top:622.64px;font-size:10.94px;color:#1c2b33;font-weight:700;transform:scaleX(1.0600);transform-origin:0 50%;">Age and gender distribution</span>
<div class="a" style="left:1291px;top:615px;width:102px;height:26px;background:#fff;border:1px solid #9aa2a8;border-radius:4px;"></div>
<span class="t" id="t63" style="left:1303.7px;top:624.73px;font-size:10.24px;color:#1c2b33;transform:scaleX(0.9319);transform-origin:0 50%;">All</span>
<svg class="a" style="left:1374.8px;top:626.2px;" width="8" height="4.6" viewBox="0 0 8 4.6"><path d="M.4,.3 H7.6 L4,4.3 Z" fill="#1c2b33" stroke="#1c2b33" stroke-width=".6" stroke-linejoin="round"/></svg>
<div class="a" style="left:1397px;top:615px;width:102px;height:26px;background:#fff;border:1px solid #9aa2a8;border-radius:4px;"></div>
<span class="t" id="t64" style="left:1408.7px;top:624.73px;font-size:10.24px;color:#1c2b33;transform:scaleX(0.9402);transform-origin:0 50%;">Results</span>
<svg class="a" style="left:1480.3px;top:626.2px;" width="8" height="4.6" viewBox="0 0 8 4.6"><path d="M.4,.3 H7.6 L4,4.3 Z" fill="#1c2b33" stroke="#1c2b33" stroke-width=".6" stroke-linejoin="round"/></svg>
<div class="a" style="left:746.5px;top:812.9px;width:745.5px;height:1.1px;background:#edeef0;"></div>
<span class="t" id="t65" style="right:1179.6px;top:809.09px;font-size:9.62px;color:#2f3a41;transform:scaleX(1.0449);transform-origin:100% 50%;">0</span>
<div class="a" style="left:746.5px;top:788.53px;width:745.5px;height:1.1px;background:#edeef0;"></div>
<span class="t" id="t66" style="right:1179.6px;top:784.72px;font-size:9.62px;color:#2f3a41;transform:scaleX(1.0449);transform-origin:100% 50%;">5</span>
<div class="a" style="left:746.5px;top:764.16px;width:745.5px;height:1.1px;background:#edeef0;"></div>
<span class="t" id="t67" style="right:1179.6px;top:760.35px;font-size:9.62px;color:#2f3a41;transform:scaleX(1.0184);transform-origin:100% 50%;">10</span>
<div class="a" style="left:746.5px;top:739.79px;width:745.5px;height:1.1px;background:#edeef0;"></div>
<span class="t" id="t68" style="right:1179.6px;top:735.98px;font-size:9.62px;color:#2f3a41;transform:scaleX(1.0184);transform-origin:100% 50%;">15</span>
<div class="a" style="left:746.5px;top:715.42px;width:745.5px;height:1.1px;background:#edeef0;"></div>
<span class="t" id="t69" style="right:1179.6px;top:711.36px;font-size:9.62px;color:#2f3a41;transform:scaleX(1.0184);transform-origin:100% 50%;">20</span>
<div class="a" style="left:746.5px;top:691.05px;width:745.5px;height:1.1px;background:#edeef0;"></div>
<span class="t" id="t70" style="right:1179.6px;top:687.24px;font-size:9.62px;color:#2f3a41;transform:scaleX(1.0184);transform-origin:100% 50%;">25</span>
<div class="a" style="left:746.5px;top:666.68px;width:745.5px;height:1.1px;background:#edeef0;"></div>
<span class="t" id="t71" style="right:1179.6px;top:662.87px;font-size:9.62px;color:#2f3a41;transform:scaleX(1.0184);transform-origin:100% 50%;">30</span>
<div class="a" style="left:767.2px;top:813.01px;width:36px;height:0.39px;background:#5b3cc0;"></div>
<div class="a" style="left:804.4px;top:813.11px;width:35.9px;height:0.29px;background:#33c8cc;"></div>
<span class="t" id="t72" style="left:804px;top:817.89px;font-size:9.62px;color:#2f3a41;transform:translateX(-50%) scaleX(1.0375);transform-origin:50% 50%;">13-17</span>
<div class="a" style="left:875.85px;top:725.67px;width:36px;height:87.73px;background:#5b3cc0;border-radius:2px 2px 0 0;"></div>
<div class="a" style="left:913.05px;top:793.9px;width:35.9px;height:19.5px;background:#33c8cc;border-radius:2px 2px 0 0;"></div>
<span class="t" id="t73" style="left:912.65px;top:817.89px;font-size:9.62px;color:#2f3a41;transform:translateX(-50%) scaleX(1.0375);transform-origin:50% 50%;">18-24</span>
<div class="a" style="left:984.5px;top:686.68px;width:36px;height:126.72px;background:#5b3cc0;border-radius:2px 2px 0 0;"></div>
<div class="a" style="left:1021.7px;top:769.53px;width:35.9px;height:43.87px;background:#33c8cc;border-radius:2px 2px 0 0;"></div>
<span class="t" id="t74" style="left:1021.3px;top:817.89px;font-size:9.62px;color:#2f3a41;transform:translateX(-50%) scaleX(1.0375);transform-origin:50% 50%;">25-34</span>
<div class="a" style="left:1093.15px;top:706.17px;width:36px;height:107.23px;background:#5b3cc0;border-radius:2px 2px 0 0;"></div>
<div class="a" style="left:1130.35px;top:808.53px;width:35.9px;height:4.87px;background:#33c8cc;border-radius:2px 2px 0 0;"></div>
<span class="t" id="t75" style="left:1129.95px;top:817.89px;font-size:9.62px;color:#2f3a41;transform:translateX(-50%) scaleX(1.0375);transform-origin:50% 50%;">35-44</span>
<div class="a" style="left:1201.8px;top:774.41px;width:36px;height:38.99px;background:#5b3cc0;border-radius:2px 2px 0 0;"></div>
<div class="a" style="left:1239px;top:808.53px;width:35.9px;height:4.87px;background:#33c8cc;border-radius:2px 2px 0 0;"></div>
<span class="t" id="t76" style="left:1238.6px;top:817.89px;font-size:9.62px;color:#2f3a41;transform:translateX(-50%) scaleX(1.0375);transform-origin:50% 50%;">45-54</span>
<div class="a" style="left:1310.45px;top:784.16px;width:36px;height:29.24px;background:#5b3cc0;border-radius:2px 2px 0 0;"></div>
<div class="a" style="left:1347.65px;top:803.65px;width:35.9px;height:9.75px;background:#33c8cc;border-radius:2px 2px 0 0;"></div>
<span class="t" id="t77" style="left:1347.25px;top:817.89px;font-size:9.62px;color:#2f3a41;transform:translateX(-50%) scaleX(1.0375);transform-origin:50% 50%;">55-64</span>
<div class="a" style="left:1419.1px;top:813.01px;width:36px;height:0.39px;background:#5b3cc0;"></div>
<div class="a" style="left:1456.3px;top:813.11px;width:35.9px;height:0.29px;background:#33c8cc;"></div>
<span class="t" id="t78" style="left:1455.9px;top:817.89px;font-size:9.62px;color:#2f3a41;transform:translateX(-50%) scaleX(1.0421);transform-origin:50% 50%;">65+</span>
<div class="a" style="left:1007px;top:842.2px;width:10px;height:9.7px;background:#5b3cc0;border-radius:1px;"></div>
<span class="t" id="t79" style="left:1023px;top:842.5px;font-size:9.19px;color:#2f3a41;transform:scaleX(1.0256);transform-origin:0 50%;">Men</span>
<span class="t" id="t80" style="left:1023px;top:855.54px;font-size:7.88px;color:#4a555c;transform:scaleX(1.0573);transform-origin:0 50%;">82% (80)</span>
<span class="t" id="t81" style="left:1023px;top:865.71px;font-size:8.14px;color:#4a555c;transform:scaleX(0.9950);transform-origin:0 50%;">Cost per result: $1.52</span>
<div class="a" style="left:1121.8px;top:842.2px;width:10px;height:9.7px;background:#33c8cc;border-radius:1px;"></div>
<span class="t" id="t82" style="left:1137.7px;top:842.5px;font-size:9.19px;color:#2f3a41;transform:scaleX(1.0370);transform-origin:0 50%;">Women</span>
<span class="t" id="t83" style="left:1137.7px;top:855.54px;font-size:7.88px;color:#4a555c;transform:scaleX(0.9572);transform-origin:0 50%;">18% (17)</span>
<span class="t" id="t84" style="left:1137.7px;top:865.71px;font-size:8.14px;color:#4a555c;transform:scaleX(1.0014);transform-origin:0 50%;">Cost per result: $1.09</span>
<div class="a" style="left:0px;top:121px;width:37px;height:896px;background:#fff;"></div>
<svg class="a" style="left:8.6px;top:134.73px;" width="19.6" height="12.54" viewBox="0 0 20 12.800"><path d="M3.300,11.700 C1.600,11.700 1,10.200 1,8.400 C1,4.800 3,1.100 5.800,1.100 C8.100,1.100 9.500,3 11.100,5.700 L13.500,9.500 C14.600,11.200 15.500,11.700 16.700,11.700 C18.400,11.700 19,10.200 19,8.400 C19,4.800 17,1.100 14.300,1.100 C12.400,1.100 11,2.600 9.800,4.500 L6.500,9.700 C5.500,11.200 4.500,11.700 3.300,11.700 Z" fill="none" stroke="#0a6fe0" stroke-width="2.1" stroke-linejoin="round"/></svg>
<svg class="a" style="left:10px;top:179px;" width="18" height="18" viewBox="0 0 18 18"><g fill="none" stroke="#414b52" stroke-width="1" stroke-linecap="round" stroke-linejoin="round"><circle cx="9" cy="9" r="7.400"/><path d="M2.600,11.800 H15.400 M3.500,13.200 H14.500 M9,9.400 L11.800,6.400 M9,3.300 V4.300 M4.400,5 L5.100,5.700 M13.600,5 L12.900,5.700 M3,8.600 H4"/></g></svg>
<div class="a" style="left:5px;top:201px;width:27px;height:26.5px;background:#e2edf6;border-radius:5px;"></div>
<svg class="a" style="left:11.7px;top:206.9px;" width="14.6" height="14.6" viewBox="0 0 16 16"><g fill="#0a78be"><rect x="0" y="0" width="16" height="3.200"/><rect x="0" y="4.600" width="4.400" height="2.600"/><rect x="5.800" y="4.600" width="4.400" height="2.600"/><rect x="11.600" y="4.600" width="4.400" height="2.600"/><rect x="0" y="8.600" width="4.400" height="2.600"/><rect x="5.800" y="8.600" width="4.400" height="2.600"/><rect x="11.600" y="8.600" width="4.400" height="2.600"/><rect x="0" y="12.600" width="4.400" height="2.600"/><rect x="5.800" y="12.600" width="4.400" height="2.600"/><rect x="11.600" y="12.600" width="4.400" height="2.600"/></g></svg>
<svg class="a" style="left:10px;top:232px;" width="18" height="18" viewBox="0 0 18 18"><g fill="none" stroke="#414b52" stroke-width="1" stroke-linecap="round" stroke-linejoin="round"><path d="M3.800,2.200 H11.400 V14.600 H3.800 Z M5.800,5 H9.400 M5.800,7.400 H9.400 M11.400,3.400 L15.600,4.200 L14,16 L6,14.800 M2.200,3.400 V15.600 L9,16.200"/></g></svg>
<svg class="a" style="left:10px;top:259px;" width="18" height="18" viewBox="0 0 18 18"><g fill="none" stroke="#414b52" stroke-width="1" stroke-linecap="round" stroke-linejoin="round"><circle cx="9" cy="5.400" r="1.700"/><circle cx="4.300" cy="6" r="1.400"/><circle cx="13.700" cy="6" r="1.400"/><path d="M5.600,12.800 V10.200 a1.600,1.600 0 0 1 1.600,-1.600 h3.600 a1.600,1.600 0 0 1 1.600,1.600 V12.800 Z M5.400,9 H3.200 a1.400,1.400 0 0 0 -1.400,1.400 V12.200 H5.400 M12.600,9 H14.800 a1.400,1.400 0 0 1 1.400,1.400 V12.200 H12.600"/></g></svg>
<svg class="a" style="left:11.25px;top:286.05px;" width="15.5" height="15.5" viewBox="0 0 18 18"><g fill="none" stroke="#414b52" stroke-width="1" stroke-linecap="round" stroke-linejoin="round"><path d="M2.600,6.200 H6 L12.400,3 V13 L6,9.800 H2.600 Z M12.400,3 H13.800 V9 M4.200,9.800 V13.600 H6.600 V9.800"/><path d="M11,12.600 L15,16 M15,12.600 L11,16" stroke-width="1.500"/></g></svg>
<svg class="a" style="left:10px;top:312px;" width="18" height="18" viewBox="0 0 18 18"><g fill="none" stroke="#414b52" stroke-width="1" stroke-linecap="round" stroke-linejoin="round"><rect x="1.600" y="3.800" width="14.800" height="10.400" rx="1.400"/><rect x="1.600" y="5.800" width="14.800" height="2.200" fill="#414b52"/><path d="M4,11.800 H10" stroke="#aab2b8"/></g></svg>
<svg class="a" style="left:10px;top:339px;" width="18" height="18" viewBox="0 0 18 18"><g fill="none" stroke="#414b52" stroke-width="1" stroke-linecap="round" stroke-linejoin="round"><circle cx="9" cy="5.800" r="3.600"/><circle cx="3.200" cy="12.600" r="1.500"/><circle cx="9" cy="14.800" r="1.500"/><circle cx="14.800" cy="12.600" r="1.500"/><path d="M6.400,8.400 L4,11.400 M9,9.400 V13.300 M11.600,8.400 L14,11.400"/></g></svg>
<div class="a" style="left:13px;top:370.6px;width:11.5px;height:1.1px;background:#414b52;"></div>
<div class="a" style="left:13px;top:375.4px;width:11.5px;height:1.1px;background:#414b52;"></div>
<div class="a" style="left:13px;top:380.2px;width:11.5px;height:1.1px;background:#414b52;"></div>
<div class="a" style="left:11px;top:859px;width:16px;height:1px;background:#d5dadd;"></div>
<div class="a" style="left:7px;top:865px;width:23px;height:23px;background:#e4f3ef;border-radius:12px;"></div>
<span class="t" id="t85" style="left:15.5px;top:871.67px;font-size:11.38px;color:#2f9e8f;transform:scaleX(0.9481);transform-origin:0 50%;">?</span>
<svg class="a" style="left:10.2px;top:896px;" width="16" height="16" viewBox="0 0 16 16"><g fill="none" stroke="#414b52" stroke-width="1" stroke-linecap="round" stroke-linejoin="round"><rect x="3.400" y="1.800" width="10.800" height="11.600" rx="1.400"/><path d="M3.400,4.400 H2.400 a1,1 0 0 0 -1,1 V12.600 a1.600,1.600 0 0 0 1.600,1.600 H12.400 M9,8.800 H12 M6,11 H12"/><circle cx="7.400" cy="5.600" r="1.500" fill="#414b52"/></g></svg>
<svg class="a" style="left:10.2px;top:920px;" width="16" height="16" viewBox="0 0 16 16"><g fill="none" stroke="#414b52" stroke-width="1" stroke-linecap="round" stroke-linejoin="round"><circle cx="8" cy="8" r="2.400"/><path d="M6.800,1.400 H9.200 L9.600,3.200 L11.200,4.100 L12.900,3.500 L14.100,5.600 L12.800,6.800 V8.800 L14.100,10.400 L12.900,12.500 L11.200,11.900 L9.600,12.800 L9.200,14.600 H6.800 L6.400,12.800 L4.800,11.900 L3.100,12.500 L1.900,10.400 L3.200,8.800 V6.800 L1.900,5.600 L3.100,3.500 L4.800,4.100 L6.400,3.200 Z"/></g></svg>
<svg class="a" style="left:9.5px;top:945px;" width="16" height="16" viewBox="0 0 16 16"><g fill="none" stroke="#414b52" stroke-width="1" stroke-linecap="round" stroke-linejoin="round"><path d="M3,11.600 C4.600,10 4,6.800 5,5 a3.400,3.400 0 0 1 6,0 C12,6.800 11.400,10 13,11.600 Z M6.600,13.400 a1.500,1.500 0 0 0 2.800,0"/></g></svg>
<div class="a" style="left:17.5px;top:941.5px;width:15px;height:10.5px;background:#d6311a;border-radius:5.2px;"></div>
<span class="t" id="t86" style="left:20.3px;top:943.37px;font-size:7px;color:#fff;font-weight:700;transform:scaleX(1.1928);transform-origin:0 50%;">18</span>
<svg class="a" style="left:10.2px;top:968px;" width="16" height="16" viewBox="0 0 16 16"><g fill="none" stroke="#414b52" stroke-width="1" stroke-linecap="round" stroke-linejoin="round"><circle cx="6.800" cy="6.800" r="5"/><path d="M10.500,10.500 L14.600,14.600" stroke-width="1.400"/></g></svg>
<svg class="a" style="left:10.2px;top:992px;" width="16" height="16" viewBox="0 0 16 16"><g fill="none" stroke="#414b52" stroke-width="1" stroke-linecap="round" stroke-linejoin="round"><ellipse cx="8" cy="9.400" rx="3.800" ry="4.800"/><path d="M8,4.600 V14.200 M5.600,4.800 a2.400,2.400 0 0 1 4.800,0 M5.800,2 L6.600,3.200 M10.200,2 L9.400,3.200 M4.200,7.800 H1.800 M4.200,10.400 H1.800 M14.200,7.800 H11.800 M14.200,10.400 H11.800 M2.600,13.600 L4.800,12.400 M13.400,13.600 L11.200,12.400"/></g></svg>
<div class="a" style="left:37px;top:121px;width:30px;height:898.5px;background:#1c2b33;"></div>
<div class="a" style="left:40px;top:126px;width:24px;height:24px;background:#344854;border-radius:4px;"></div>
<svg class="a" style="left:47.6px;top:134.2px;" width="8.8" height="8.8" viewBox="0 0 8.8 8.8"><path d="M.8,.8 L8,8 M8,.8 L.8,8" stroke="#fff" stroke-width="1.250" stroke-linecap="round"/></svg>
<div class="a" style="left:40px;top:156px;width:24px;height:24px;background:#344854;border-radius:4px;"></div>
<svg class="a" style="left:47.3px;top:162.6px;" width="10" height="9.5" viewBox="0 0 10 9.5"><g fill="#fff"><rect x=".3" y="6.300" width="1.800" height="3"/><rect x="2.800" y="3.600" width="1.800" height="5.700"/><rect x="5.300" y="5" width="1.800" height="4.300"/><rect x="7.800" y=".4" width="1.800" height="8.900"/></g></svg>
<svg class="a" style="left:46.5px;top:191.5px;" width="11" height="11" viewBox="0 0 11 11"><path d="M1,10 L1.600,7.400 L7.600,1.400 a1.300,1.300 0 0 1 1.900,1.900 L3.500,9.300 Z M6.600,2.400 L8.500,4.300" fill="none" stroke="#fff" stroke-width="1" stroke-linejoin="round"/></svg>
<svg class="a" style="left:46px;top:220.5px;" width="12" height="12" viewBox="0 0 12 12"><circle cx="6" cy="6" r="4.900" fill="none" stroke="#fff" stroke-width="1.100"/><path d="M6,3.200 V6.200 L7.800,7.400" fill="none" stroke="#fff" stroke-width="1.100" stroke-linecap="round"/></svg>
<div class="a" style="left:46.5px;top:579.5px;width:11px;height:11px;background:#15222a;border-radius:5.5px;"></div>
<svg class="a" style="left:50px;top:582px;" width="5" height="6" viewBox="0 0 5 6"><path d="M1,0.500 L4.200,3 L1,5.500 Z" fill="#fff"/></svg>
<div class="a" style="left:67px;top:121px;width:239px;height:896px;background:#fff;"></div>
<div class="a" style="left:306px;top:121px;width:1px;height:896px;background:#cbced2;"></div>
<div class="a" style="left:76px;top:126px;width:222px;height:25px;background:#fff;border:1px solid #ccd1d5;border-radius:3px;"></div>
<svg class="a" style="left:83.5px;top:132px;" width="13" height="13" viewBox="0 0 13 13"><circle cx="5.400" cy="5.400" r="3.900" fill="none" stroke="#56616a" stroke-width="1.100"/><path d="M8.300,8.300 L11.600,11.600" stroke="#56616a" stroke-width="1.200" stroke-linecap="round"/></svg>
<span class="t" id="t87" style="left:100px;top:134.5px;font-size:9.19px;color:#8a949b;transform:scaleX(1.0151);transform-origin:0 50%;">Search</span>
<div class="a" style="left:67px;top:155px;width:239px;height:1px;background:#e3e7ea;"></div>
<div class="a" style="left:67px;top:164px;width:239px;height:31px;background:#e2edf6;"></div>
<div class="a" style="left:67px;top:164px;width:1.2px;height:31px;background:#0d5485;"></div>
<svg class="a" style="left:76px;top:175.8px;" width="10.5" height="9.03" viewBox="0 0 10.7 9.2"><path d="M.3,1.400 a1,1 0 0 1 1,-1 h2.600 l1.200,1.300 h4.300 a1,1 0 0 1 1,1 v5 a1,1 0 0 1 -1,1 h-8.100 a1,1 0 0 1 -1,-1 z" fill="#0a78be"/></svg>
<span class="t" id="t88" style="left:92px;top:175.19px;font-size:9.62px;color:#2b3a42;transform:scaleX(0.9795);transform-origin:0 50%;">old video hair pack</span>
<svg class="a" style="left:279px;top:177.5px;" width="14" height="4" viewBox="0 0 14 4"><circle cx="3.05" cy="2" r="0.95" fill="#868b90"/><circle cx="7" cy="2" r="0.95" fill="#868b90"/><circle cx="10.95" cy="2" r="0.95" fill="#868b90"/></svg>
<svg class="a" style="left:87px;top:205.3px;" width="10.5" height="10.5" viewBox="0 0 10.5 10.5"><g fill="none" stroke="#4a545b" stroke-width="1.15"><rect x=".6" y=".6" width="3.8" height="3.8"/><rect x=".6" y="6.1" width="3.8" height="3.8"/><path d="M10,.6 H6.1 V4.400 H10 M10,6.100 H6.100 V9.900 H10"/></g></svg>
<span class="t" id="t89" style="left:103px;top:206.09px;font-size:9.62px;color:#383f45;transform:scaleX(0.9631);transform-origin:0 50%;">new pixel by sob taka bak pack – Copy</span>
<svg class="a" style="left:279px;top:208.2px;" width="14" height="4" viewBox="0 0 14 4"><circle cx="3.05" cy="2" r="0.95" fill="#868b90"/><circle cx="7" cy="2" r="0.95" fill="#868b90"/><circle cx="10.95" cy="2" r="0.95" fill="#868b90"/></svg>
<svg class="a" style="left:97.2px;top:236.4px;" width="10.2" height="10.2" viewBox="0 0 10.5 10.5"><rect x=".6" y=".6" width="9.300" height="9.300" rx="1" fill="none" stroke="#767e85" stroke-width="1.15"/><rect x="1.100" y="1.100" width="8.300" height="2.200" fill="#b9c0c6"/><path d="M.6,3.400 H9.900" stroke="#767e85" stroke-width=".9"/></svg>
<span class="t" id="t90" style="left:113.5px;top:236.99px;font-size:9.62px;color:#383f45;transform:scaleX(0.9736);transform-origin:0 50%;">new pixel by sob taka bak pack</span>
<svg class="a" style="left:279px;top:239.1px;" width="14" height="4" viewBox="0 0 14 4"><circle cx="3.05" cy="2" r="0.95" fill="#868b90"/><circle cx="7" cy="2" r="0.95" fill="#868b90"/><circle cx="10.95" cy="2" r="0.95" fill="#868b90"/></svg>
<svg class="a" style="left:87px;top:266.3px;" width="10.5" height="10.5" viewBox="0 0 10.5 10.5"><g fill="none" stroke="#4a545b" stroke-width="1.15"><rect x=".6" y=".6" width="3.8" height="3.8"/><rect x=".6" y="6.1" width="3.8" height="3.8"/><path d="M10,.6 H6.1 V4.400 H10 M10,6.100 H6.100 V9.900 H10"/></g></svg>
<span class="t" id="t91" style="left:103px;top:267.09px;font-size:9.62px;color:#383f45;transform:scaleX(0.9721);transform-origin:0 50%;">new pixel by sob taka bak pack</span>
<svg class="a" style="left:279px;top:269.2px;" width="14" height="4" viewBox="0 0 14 4"><circle cx="3.05" cy="2" r="0.95" fill="#868b90"/><circle cx="7" cy="2" r="0.95" fill="#868b90"/><circle cx="10.95" cy="2" r="0.95" fill="#868b90"/></svg>
<svg class="a" style="left:97.2px;top:297.2px;" width="10.2" height="10.2" viewBox="0 0 10.5 10.5"><rect x=".6" y=".6" width="9.300" height="9.300" rx="1" fill="none" stroke="#767e85" stroke-width="1.15"/><rect x="1.100" y="1.100" width="8.300" height="2.200" fill="#b9c0c6"/><path d="M.6,3.400 H9.900" stroke="#767e85" stroke-width=".9"/></svg>
<span class="t" id="t92" style="left:113.5px;top:297.79px;font-size:9.62px;color:#383f45;transform:scaleX(0.9736);transform-origin:0 50%;">new pixel by sob taka bak pack</span>
<svg class="a" style="left:279px;top:299.9px;" width="14" height="4" viewBox="0 0 14 4"><circle cx="3.05" cy="2" r="0.95" fill="#868b90"/><circle cx="7" cy="2" r="0.95" fill="#868b90"/><circle cx="10.95" cy="2" r="0.95" fill="#868b90"/></svg>
<svg class="a" style="left:87px;top:328.1px;" width="10.5" height="10.5" viewBox="0 0 10.5 10.5"><g fill="none" stroke="#4a545b" stroke-width="1.15"><rect x=".6" y=".6" width="3.8" height="3.8"/><rect x=".6" y="6.1" width="3.8" height="3.8"/><path d="M10,.6 H6.1 V4.400 H10 M10,6.100 H6.100 V9.900 H10"/></g></svg>
<span class="t" id="t93" style="left:103px;top:328.89px;font-size:9.62px;color:#383f45;transform:scaleX(0.9631);transform-origin:0 50%;">new pixel by sob taka bak pack – Copy</span>
<svg class="a" style="left:279px;top:331px;" width="14" height="4" viewBox="0 0 14 4"><circle cx="3.05" cy="2" r="0.95" fill="#868b90"/><circle cx="7" cy="2" r="0.95" fill="#868b90"/><circle cx="10.95" cy="2" r="0.95" fill="#868b90"/></svg>
<svg class="a" style="left:97.2px;top:358.5px;" width="10.2" height="10.2" viewBox="0 0 10.5 10.5"><rect x=".6" y=".6" width="9.300" height="9.300" rx="1" fill="none" stroke="#767e85" stroke-width="1.15"/><rect x="1.100" y="1.100" width="8.300" height="2.200" fill="#b9c0c6"/><path d="M.6,3.400 H9.900" stroke="#767e85" stroke-width=".9"/></svg>
<span class="t" id="t94" style="left:113.5px;top:359.09px;font-size:9.62px;color:#383f45;transform:scaleX(0.9736);transform-origin:0 50%;">new pixel by sob taka bak pack</span>
<svg class="a" style="left:279px;top:361.2px;" width="14" height="4" viewBox="0 0 14 4"><circle cx="3.05" cy="2" r="0.95" fill="#868b90"/><circle cx="7" cy="2" r="0.95" fill="#868b90"/><circle cx="10.95" cy="2" r="0.95" fill="#868b90"/></svg>
<svg class="a" style="left:87px;top:389.1px;" width="10.5" height="10.5" viewBox="0 0 10.5 10.5"><g fill="none" stroke="#4a545b" stroke-width="1.15"><rect x=".6" y=".6" width="3.8" height="3.8"/><rect x=".6" y="6.1" width="3.8" height="3.8"/><path d="M10,.6 H6.1 V4.400 H10 M10,6.100 H6.100 V9.900 H10"/></g></svg>
<span class="t" id="t95" style="left:103px;top:389.89px;font-size:9.62px;color:#383f45;transform:scaleX(0.9656);transform-origin:0 50%;">new pixel by sob taka bak pack – Cop...</span>
<svg class="a" style="left:279px;top:392px;" width="14" height="4" viewBox="0 0 14 4"><circle cx="3.05" cy="2" r="0.95" fill="#868b90"/><circle cx="7" cy="2" r="0.95" fill="#868b90"/><circle cx="10.95" cy="2" r="0.95" fill="#868b90"/></svg>
<svg class="a" style="left:97.2px;top:420.2px;" width="10.2" height="10.2" viewBox="0 0 10.5 10.5"><rect x=".6" y=".6" width="9.300" height="9.300" rx="1" fill="none" stroke="#767e85" stroke-width="1.15"/><rect x="1.100" y="1.100" width="8.300" height="2.200" fill="#b9c0c6"/><path d="M.6,3.400 H9.900" stroke="#767e85" stroke-width=".9"/></svg>
<span class="t" id="t96" style="left:113.5px;top:420.79px;font-size:9.62px;color:#383f45;transform:scaleX(0.9736);transform-origin:0 50%;">new pixel by sob taka bak pack</span>
<svg class="a" style="left:279px;top:422.9px;" width="14" height="4" viewBox="0 0 14 4"><circle cx="3.05" cy="2" r="0.95" fill="#868b90"/><circle cx="7" cy="2" r="0.95" fill="#868b90"/><circle cx="10.95" cy="2" r="0.95" fill="#868b90"/></svg>
<div class="a" style="left:307px;top:121px;width:1598px;height:94px;background:#fff;"></div>
<div class="a" style="left:314px;top:123px;width:28px;height:26px;background:#fff;border:1px solid #8d969c;border-radius:4px;"></div>
<svg class="a" style="left:322.5px;top:130.2px;" width="11" height="11" viewBox="0 0 11 11"><rect x=".8" y=".8" width="9.400" height="9.400" rx="1.800" fill="none" stroke="#111" stroke-width="1.500"/><path d="M.8,2.600 a1.800,1.800 0 0 1 1.800,-1.800 H4.300 V10.200 H2.600 a1.800,1.800 0 0 1 -1.800,-1.800 Z" fill="#111"/></svg>
<div class="a" style="left:349px;top:126px;width:104px;height:19px;background:#e2edf6;border-radius:3px;"></div>
<svg class="a" style="left:352px;top:131.2px;" width="10" height="8.6" viewBox="0 0 10.7 9.2"><path d="M.3,1.400 a1,1 0 0 1 1,-1 h2.600 l1.200,1.300 h4.300 a1,1 0 0 1 1,1 v5 a1,1 0 0 1 -1,1 h-8.100 a1,1 0 0 1 -1,-1 z" fill="#0a78be"/></svg>
<span class="t" id="t97" style="left:365.5px;top:130.79px;font-size:9.62px;color:#0a78be;transform:scaleX(1.0544);transform-origin:0 50%;">old video hair pack</span>
<svg class="a" style="left:459.6px;top:132px;" width="6" height="8" viewBox="0 0 6 8"><path d="M1.600,.9 L4.500,4 L1.600,7.100" fill="none" stroke="#88929a" stroke-width="1" stroke-linecap="round" stroke-linejoin="round"/></svg>
<svg class="a" style="left:474px;top:130px;" width="11" height="11" viewBox="0 0 11 11"><g fill="none" stroke="#3f4950" stroke-width="1.2"><rect x=".6" y=".6" width="3.9" height="3.9" rx=".4"/><rect x="6.500" y=".6" width="3.9" height="3.9" rx=".4"/><rect x=".6" y="6.500" width="3.9" height="3.9" rx=".4"/><rect x="6.500" y="6.500" width="3.9" height="3.9" rx=".4"/></g></svg>
<span class="t" id="t98" style="left:488px;top:130.99px;font-size:9.62px;color:#56616a;transform:scaleX(1.0625);transform-origin:0 50%;">4 Ad sets</span>
<svg class="a" style="left:539.6px;top:132px;" width="6" height="8" viewBox="0 0 6 8"><path d="M1.600,.9 L4.500,4 L1.600,7.100" fill="none" stroke="#88929a" stroke-width="1" stroke-linecap="round" stroke-linejoin="round"/></svg>
<svg class="a" style="left:554px;top:130.3px;" width="10.5" height="10.5" viewBox="0 0 10.5 10.5"><rect x=".6" y=".6" width="9.300" height="9.300" rx="1" fill="none" stroke="#59636b" stroke-width="1.15"/><rect x="1.100" y="1.100" width="8.300" height="2.200" fill="#b9c0c6"/><path d="M.6,3.400 H9.900" stroke="#59636b" stroke-width=".9"/></svg>
<span class="t" id="t99" style="left:568px;top:130.99px;font-size:9.62px;color:#56616a;transform:scaleX(1.0604);transform-origin:0 50%;">4 Ads</span>
<span class="t" id="t100" style="left:1803.5px;top:131.5px;font-size:9.19px;color:#6b767e;transform:scaleX(1.1426);transform-origin:0 50%;">Off</span>
<div class="a" style="left:1825px;top:128px;width:1px;height:15.5px;background:#d3d9dd;"></div>
<div class="a" style="left:1834px;top:128px;width:26px;height:14.5px;background:#fff;border:1px solid #cfd5d9;border-radius:7.5px;"></div>
<div class="a" style="left:1836px;top:129.8px;width:11px;height:11px;background:#2a3a43;border-radius:5.5px;"></div>
<div class="a" style="left:1869px;top:124px;width:28.5px;height:24px;background:#fff;border:1px solid #9aa2a8;border-radius:3px;"></div>
<div class="a" style="left:1871.5px;top:123px;width:23.5px;height:2.5px;background:#fff;"></div>
<div class="a" style="left:1871.5px;top:146.5px;width:23.5px;height:2.5px;background:#fff;"></div>
<svg class="a" style="left:1876.5px;top:133.5px;" width="14" height="4" viewBox="0 0 14 4"><circle cx="3.6" cy="2" r="1" fill="#1c2b33"/><circle cx="7" cy="2" r="1" fill="#1c2b33"/><circle cx="10.4" cy="2" r="1" fill="#1c2b33"/></svg>
<div class="a" style="left:307px;top:153.3px;width:795px;height:23.5px;background:#e2ecf4;border-radius:0 3px 3px 0;"></div>
<svg class="a" style="left:668.8px;top:160.6px;" width="10.5" height="9.5" viewBox="0 0 10.5 9.5"><g fill="#0a78be"><rect x="3.900" y="2.600" width="1.700" height="6.400"/><rect x="6.400" y="3.800" width="1.500" height="5.200" opacity=".55"/><rect x="8.600" y=".3" width="1.700" height="8.700"/><path d="M2.600,5.200 C1.200,5.800 .5,6.800 .5,7.800 C.5,8.600 1,9 1.800,9" fill="none" stroke="#0a78be" stroke-width="1"/></g></svg>
<span class="t" id="t101" style="left:684.8px;top:159.44px;font-size:9.62px;color:#1272b0;font-weight:700;transform:scaleX(0.9600);transform-origin:0 50%;">Performance</span>
<svg class="a" style="left:1479.5px;top:159px;" width="12" height="12" viewBox="0 0 12 12"><circle cx="6" cy="6.400" r="4.900" fill="none" stroke="#2b363d" stroke-width="1.100" stroke-dasharray="4.050 7.300 19.450 0"/><path d="M6,9.200 V4.400 M4,6.200 L6,4.200 L8,6.200" fill="none" stroke="#2b363d" stroke-width="1.100" stroke-linecap="round" stroke-linejoin="round"/></svg>
<span class="t" id="t102" style="left:1501.5px;top:160.09px;font-size:9.62px;color:#414b52;transform:scaleX(1.0154);transform-origin:0 50%;">Actions</span>
<div class="a" style="left:307px;top:180px;width:1597px;height:1px;background:#e3e5e7;"></div>
<div class="a" style="left:1689px;top:185px;width:212px;height:26px;background:#fff;border:1px solid #9aa2a8;border-radius:4px;"></div>
<svg class="a" style="left:1697.5px;top:192px;" width="12" height="12" viewBox="0 0 12 12"><g fill="none" stroke="#2b363d" stroke-width="1"><rect x=".8" y="1.200" width="10.400" height="9.800" rx="1.200"/><path d="M.8,3.600 H11.200 M.8,7.300 H11.200 M4.200,3.600 V11 M7.700,3.600 V11 M3,2.400 H9" /></g></svg>
<span class="t" id="t103" style="left:1714.3px;top:193.58px;font-size:10.24px;color:#222e35;transform:scaleX(0.9572);transform-origin:0 50%;">Maximum: 20 Jun 2022 - 20 Jul 2025</span>
<svg class="a" style="left:1883px;top:195.7px;" width="8" height="4.6" viewBox="0 0 8 4.6"><path d="M.4,.3 H7.6 L4,4.3 Z" fill="#1c2b33" stroke="#1c2b33" stroke-width=".6" stroke-linejoin="round"/></svg>
<div class="a" style="left:0px;top:1040px;width:1920px;height:40px;background:linear-gradient(90deg,#25251e 0%,#27261f 55%,#2c2620 80%,#26231f 100%);"></div>
<svg class="a" style="left:16px;top:1052px;" width="16" height="16" viewBox="0 0 16 16"><g fill="#fff"><path d="M0,2.300 L6.600,1.400 V7.600 H0 Z"/><path d="M7.400,1.300 L16,0 V7.600 H7.400 Z"/><path d="M0,8.400 H6.600 V14.600 L0,13.700 Z"/><path d="M7.400,8.400 H16 V16 L7.400,14.700 Z"/></g></svg>
<div class="a" style="left:48.5px;top:1040px;width:287.5px;height:40px;background:#f3f3f3;border:1px solid #c9c9c9;"></div>
<svg class="a" style="left:59px;top:1051px;" width="18" height="18" viewBox="0 0 18 18"><circle cx="10.800" cy="7.200" r="5.200" fill="none" stroke="#222" stroke-width="1.400"/><path d="M7,11 L1.400,16.600" stroke="#222" stroke-width="1.500" stroke-linecap="round"/></svg>
<span class="t" id="t104" style="left:88.3px;top:1052.9px;font-size:15.5px;color:#2f2f2f;transform:scaleX(0.9285);transform-origin:0 50%;">Type here to search</span>
<svg class="a" style="left:277px;top:1047.5px;" width="23" height="23" viewBox="0 0 23 23"><path d="M11.5,0 Q14.95,8.05 23,11.5 Q14.95,14.95 11.5,23 Q8.05,14.95 0,11.5 Q8.05,8.05 11.5,0 Z" fill="#f6bd18"/></svg>
<svg class="a" style="left:305px;top:1057px;" width="12" height="12" viewBox="0 0 12 12"><path d="M6,0 Q7.8,4.2 12,6 Q7.8,7.8 6,12 Q4.2,7.8 0,6 Q4.2,4.2 6,0 Z" fill="#f8c531"/></svg>
<svg class="a" style="left:264.3px;top:1063.8px;" width="8.4" height="8.4" viewBox="0 0 8.4 8.4"><path d="M4.2,0 Q5.46,2.94 8.4,4.2 Q5.46,5.46 4.2,8.4 Q2.94,5.46 0,4.2 Q2.94,2.94 4.2,0 Z" fill="#2a9fe0"/></svg>
<div class="a" style="left:302.5px;top:1047.5px;width:4px;height:4px;background:#e8622c;border-radius:2px;"></div>
<div class="a" style="left:320.5px;top:1067px;width:4px;height:4px;background:#8cc152;border-radius:2px;"></div>
<svg class="a" style="left:351px;top:1051px;" width="18" height="17" viewBox="0 0 18 17"><g fill="none" stroke="#fff" stroke-width="1.300"><rect x="2.600" y="5" width="9" height="7"/><path d="M1,1.700 H11.600 M1,15.300 H11.600"/></g><g fill="#fff"><rect x="14.200" y="1" width="1.400" height="2.600"/><rect x="13.700" y="5" width="2.400" height="2.400"/><rect x="14.200" y="8.400" width="1.400" height="3.600"/><rect x="14.200" y="13.400" width="1.400" height="2.600"/></g></svg>
<div class="a" style="left:400px;top:1049px;width:22px;height:22px;background:#f4cf1c;border-radius:2.5px;"></div>
<svg class="a" style="left:405.5px;top:1051.5px;" width="11" height="11" viewBox="0 0 11 11"><circle cx="5.500" cy="5.500" r="5" fill="#fff"/><path d="M4.200,3 L8.200,5.500 L4.200,8 Z" fill="#f4cf1c"/></svg>
<span class="t" id="t105" style="left:402.8px;top:1064.51px;font-size:5.8px;color:#4a3a00;font-weight:700;transform:scaleX(0.9594);transform-origin:0 50%;">Player</span>
<svg class="a" style="left:447px;top:1048px;" width="25" height="25" viewBox="0 0 25 25"><path d="M8,8 V5.500 a4.500,4.500 0 0 1 9,0 V8" fill="none" stroke="#3d9ad6" stroke-width="1.800"/><path d="M1.200,6.600 H23.800 L22.800,21 a2.600,2.600 0 0 1 -2.600,2.600 H4.800 A2.600,2.600 0 0 1 2.200,21 Z" fill="#f3f3f3"/><rect x="8" y="10.600" width="4" height="4" fill="#f25022"/><rect x="13" y="10.600" width="4" height="4" fill="#7fba00"/><rect x="8" y="15.600" width="4" height="4" fill="#00a4ef"/><rect x="13" y="15.600" width="4" height="4" fill="#ffb900"/></svg>
<svg class="a" style="left:497px;top:1048px;" width="24" height="24" viewBox="0 0 24 24"><defs><linearGradient id="cpa" x1="0" y1="0" x2="0.300" y2="1"><stop offset="0" stop-color="#2a7de8"/><stop offset=".45" stop-color="#25b39a"/><stop offset=".8" stop-color="#c8d43a"/><stop offset="1" stop-color="#f2a92e"/></linearGradient><linearGradient id="cpb" x1="0.700" y1="0" x2="0.300" y2="1"><stop offset="0" stop-color="#7b5cf0"/><stop offset=".5" stop-color="#d552c8"/><stop offset="1" stop-color="#f2663a"/></linearGradient></defs><path d="M7.500,2.500 H14 C16,2.500 17,3.600 17.500,5.200 L18.200,7.500 H15 C13,7.500 12.200,8.600 11.700,10.200 L9.600,17.400 C9.100,19 8,20 6.200,20 H4.600 C2.400,20 1.400,18.400 2,16.400 L5,5.800 C5.600,3.700 6.200,2.500 7.500,2.500 Z" fill="url(#cpa)"/><path d="M16.500,21.500 H10 C8,21.500 7,20.400 6.500,18.800 L5.800,16.500 H9 C11,16.500 11.800,15.400 12.300,13.800 L14.400,6.600 C14.900,5 16,4 17.800,4 H19.400 C21.600,4 22.600,5.600 22,7.600 L19,18.200 C18.400,20.300 17.800,21.500 16.500,21.500 Z" fill="url(#cpb)"/></svg>
<svg class="a" style="left:546.5px;top:1050.5px;" width="22.5" height="18.5" viewBox="0 0 22.5 18.5"><path d="M.8,2.500 a1.300,1.300 0 0 1 1.300,-1.300 H7.600 L9.800,3.300 H20.400 a1.300,1.300 0 0 1 1.300,1.300 V7 H.8 Z" fill="#e5ad22"/><path d="M.8,5.800 H21.700 V16.400 a1.300,1.300 0 0 1 -1.300,1.300 H2.100 A1.300,1.300 0 0 1 .8,16.400 Z" fill="#fbd764"/><path d="M6,11.600 H16.500 V17.700 H13.800 V14.600 H8.700 V17.700 H6 Z" fill="#3f92da"/></svg>
<div class="a" style="left:538px;top:1078px;width:40px;height:2px;background:#82bdf0;"></div>
<svg class="a" style="left:594px;top:1047px;" width="26" height="24" viewBox="0 0 26 24"><path d="M8,7 L17.500,1 L25,6 V20 a2,2 0 0 1 -2,2 H8 Z" fill="#1a8fe0"/><path d="M8,9 L25,6 V11 L16.500,16 Z" fill="#5cc2f5"/><path d="M8,13 L25,22 H8 Z" fill="#1270c4"/><rect x=".8" y="5.500" width="14.200" height="14.500" rx="1.800" fill="#0f62b5"/></svg>
<span class="t" id="t106" style="left:598px;top:1054.86px;font-size:10.5px;color:#fff;font-weight:700;transform:scaleX(1.0157);transform-origin:0 50%;">O</span>
<div class="a" style="left:645.8px;top:1049.7px;width:20px;height:20.3px;background:#fff;border-radius:4.5px;"></div>
<svg class="a" style="left:648.3px;top:1053px;" width="15" height="14" viewBox="0 0 15 14"><path d="M1.500,2.500 H10.500 L13.500,4.600 M1.500,11.500 H10.500 L13.500,9.400 M1.500,2.500 L13.300,10 M1.500,11.500 L13.300,4" fill="none" stroke="#0c0c0c" stroke-width="1.800" stroke-linejoin="round"/></svg>
<svg class="a" style="left:692px;top:1047px;" width="25" height="24" viewBox="0 0 25 24"><path d="M3,3.500 L17,1 L23.500,5.500 L23.500,19 L12,23 L3,20.500 Z" fill="#d9ecc8"/><path d="M12,9 L23.500,7.500 M12,13.500 L23.500,12.500 M12,18 L23.500,17 M16,8.500 V21.500 M20,8 V20.200" stroke="#7fb65c" stroke-width="1.300"/><path d="M12,8.500 L23.500,7 V19 L12,23 Z" fill="#a5cf86" opacity=".55"/><path d="M1.500,4.500 L12.500,2.800 V21.500 L1.500,19.500 Z" fill="#c7e3b0"/></svg>
<span class="t" id="t107" style="left:695.5px;top:1052.62px;font-size:12px;color:#2e7d32;font-weight:700;transform:scaleX(1.2476);transform-origin:0 50%;">X</span>
<svg class="a" style="left:741.5px;top:1047.5px;" width="24.5" height="24.5" viewBox="0 0 24.5 24.5"><defs><linearGradient id="eg1" x1="0.200" y1="0" x2="0.600" y2="1"><stop offset="0" stop-color="#2aa9e8"/><stop offset=".6" stop-color="#1277d3"/><stop offset="1" stop-color="#0c59a8"/></linearGradient><linearGradient id="eg2" x1="0" y1="0.500" x2="1" y2="0.300"><stop offset="0" stop-color="#35c1f1"/><stop offset=".55" stop-color="#3fd07a"/><stop offset="1" stop-color="#6fdc4a"/></linearGradient></defs><path d="M12.200,.8 C18.800,.8 23.800,5.600 23.800,11.200 C23.800,15 21,17.200 18,17.200 C15.500,17.200 14.200,16.200 14.200,15.200 C14.200,14.400 15,14.200 15,12.800 C15,10.600 12.800,8.800 10,8.800 C5.500,8.800 2.600,12.400 2.600,16 C2.600,17 2.700,17.800 3,18.600 C1.600,16.800 .8,14.600 .8,12.200 C.8,5.800 5.900,.8 12.200,.8 Z" fill="url(#eg2)"/><path d="M.8,12.200 C.8,8 4.200,6.200 8,6.200 C12.500,6.200 15.600,9 15.600,12.200 C15.600,13.600 14.800,14.400 14.800,15 C14.800,16 16,16.800 18,16.800 C20.500,16.800 22.400,15.600 23.200,14.400 C22.400,19.800 17.800,23.800 12.200,23.800 C5.900,23.800 .8,18.600 .8,12.200 Z" fill="url(#eg1)"/><path d="M9.800,23.500 C5.800,22.500 3.600,19 3.900,15.400 C4.200,12 7,9.800 10,9.800 C12.200,9.800 13.800,11 13.800,12.600 C13.800,13.800 13,14.600 13,15.800 C13,18.800 16.600,20.200 19.800,18.800 C17.600,22.400 13.600,24.400 9.800,23.500 Z" fill="#0f5fb8" opacity=".9"/></svg>
<div class="a" style="left:779px;top:1040px;width:48px;height:40px;background:#53544c;"></div>
<div class="a" style="left:779px;top:1078px;width:48px;height:2px;background:#82bdf0;"></div>
<svg class="a" style="left:790px;top:1047.5px;" width="23" height="23" viewBox="0 0 24 24"><circle cx="12" cy="12" r="11.500" fill="#fbc116"/><path d="M12,12 L2.040,6.250 A11.500,11.500 0 0 1 21.960,6.250 Z" fill="#e33b2e"/><path d="M12,12 L2.040,6.250 A11.500,11.500 0 0 0 12,23.500 Z" fill="#1ea362"/><path d="M12,12 L12,23.500 A11.500,11.500 0 0 0 21.960,6.250 Z" fill="#fbc116"/><circle cx="12" cy="12" r="5.400" fill="#fff"/><circle cx="12" cy="12" r="4.300" fill="#4285f4"/></svg>
<svg class="a" style="left:800.8px;top:1057.8px;" width="16" height="16" viewBox="0 0 16 16"><circle cx="8" cy="8" r="8" fill="#a3238e"/><circle cx="8" cy="5.600" r="2.500" fill="#e3b48f"/><path d="M2.600,13.900 a5.600,5.600 0 0 1 10.800,0 a8,8 0 0 1 -10.800,0 Z" fill="#555a66"/><path d="M8,8.600 L6.900,13 L8,15.600 L9.100,13 Z" fill="#fff" opacity=".85"/></svg>
<div class="a" style="left:832px;top:1078px;width:40.5px;height:2px;background:#82bdf0;"></div>
<svg class="a" style="left:840px;top:1047.5px;" width="23" height="23" viewBox="0 0 24 24"><circle cx="12" cy="12" r="11.500" fill="#fbc116"/><path d="M12,12 L2.040,6.250 A11.500,11.500 0 0 1 21.960,6.250 Z" fill="#e33b2e"/><path d="M12,12 L2.040,6.250 A11.500,11.500 0 0 0 12,23.500 Z" fill="#1ea362"/><path d="M12,12 L12,23.500 A11.500,11.500 0 0 0 21.960,6.250 Z" fill="#fbc116"/><circle cx="12" cy="12" r="5.400" fill="#fff"/><circle cx="12" cy="12" r="4.300" fill="#4285f4"/></svg>
<svg class="a" style="left:850.8px;top:1057.8px;" width="16" height="16" viewBox="0 0 16 16"><circle cx="8" cy="8" r="8" fill="#16606a"/><circle cx="8" cy="5.600" r="2.500" fill="#e3b48f"/><path d="M2.600,13.900 a5.600,5.600 0 0 1 10.800,0 a8,8 0 0 1 -10.800,0 Z" fill="#15181f"/><path d="M8,8.600 L6.900,13 L8,15.600 L9.100,13 Z" fill="#fff" opacity=".85"/></svg>
<div class="a" style="left:881px;top:1078px;width:40px;height:2px;background:#82bdf0;"></div>
<svg class="a" style="left:889.2px;top:1047.5px;" width="23" height="23" viewBox="0 0 24 24"><circle cx="12" cy="12" r="11.500" fill="#fbc116"/><path d="M12,12 L2.040,6.250 A11.500,11.500 0 0 1 21.960,6.250 Z" fill="#e33b2e"/><path d="M12,12 L2.040,6.250 A11.500,11.500 0 0 0 12,23.500 Z" fill="#1ea362"/><path d="M12,12 L12,23.500 A11.500,11.500 0 0 0 21.960,6.250 Z" fill="#fbc116"/><circle cx="12" cy="12" r="5.400" fill="#fff"/><circle cx="12" cy="12" r="4.300" fill="#4285f4"/></svg>
<svg class="a" style="left:900px;top:1057.8px;" width="16" height="16" viewBox="0 0 16 16"><circle cx="8" cy="8" r="8" fill="#7d1218"/><circle cx="8" cy="5.600" r="2.500" fill="#e3b48f"/><path d="M2.600,13.900 a5.600,5.600 0 0 1 10.800,0 a8,8 0 0 1 -10.800,0 Z" fill="#1c1c24"/><path d="M8,8.600 L6.900,13 L8,15.600 L9.100,13 Z" fill="#fff" opacity=".85"/></svg>
<svg class="a" style="left:1538px;top:1047px;" width="28" height="26" viewBox="0 0 28 26"><circle cx="11" cy="16" r="7" fill="#f09a1e"/><circle cx="13.500" cy="12.500" r="6.500" fill="#26251f"/><path d="M3,11 a3,3 0 0 1 3,-3 a4.500,4.500 0 0 1 8.500,-.5 a3,3 0 0 1 .5,6 H5.500 A2.800,2.800 0 0 1 3,11 Z" fill="#b9c6d8"/><path d="M13,20 a2.600,2.600 0 0 1 2.600,-2.600 a3.800,3.800 0 0 1 7.200,-.4 a2.600,2.600 0 0 1 .4,5.200 H15.200 A2.400,2.400 0 0 1 13,20 Z" fill="#cfe0f3"/></svg>
<div class="a" style="left:1551.5px;top:1048.5px;width:11.5px;height:11.5px;background:#e33b2e;border-radius:6px;"></div>
<span class="t" id="t108" style="left:1555.3px;top:1050.13px;font-size:8.5px;color:#fff;font-weight:700;transform:scaleX(0.8871);transform-origin:0 50%;">1</span>
<span class="t" id="t109" style="left:1571px;top:1052.3px;font-size:15px;color:#fff;transform:scaleX(0.8802);transform-origin:0 50%;">28°C</span>
<span class="t" id="t110" style="left:1609.5px;top:1052.3px;font-size:15px;color:#fff;transform:scaleX(0.9141);transform-origin:0 50%;">Partly cloudy</span>
<svg class="a" style="left:1711.5px;top:1054.5px;" width="14" height="10" viewBox="0 0 14 10"><path d="M1.500,8 L7,2.200 L12.500,8" fill="none" stroke="#fff" stroke-width="1.300"/></svg>
<svg class="a" style="left:1735px;top:1051px;" width="16" height="18" viewBox="0 0 16 18"><g fill="none" stroke="#fff" stroke-width="1.200"><rect x="3.200" y="5.500" width="7" height="7" rx="1.200"/><path d="M10.200,8 L13.200,6.200 V11.800 L10.200,10 M3.500,3 a1.800,1.800 0 0 1 1.800,-1.800 H8.200 a1.800,1.800 0 0 1 1.800,1.800 M3.500,15 a1.800,1.800 0 0 0 1.800,1.800 H8.200 a1.800,1.800 0 0 0 1.800,-1.800"/></g></svg>
<svg class="a" style="left:1759px;top:1052px;" width="18" height="18" viewBox="0 0 18 18"><g fill="none" stroke="#fff" stroke-width="1.200" stroke-linecap="round"><path d="M2,15.500 A13,13 0 0 1 15,2.500" opacity=".95"/><path d="M5.500,15.500 A9.500,9.500 0 0 1 15,6"/><path d="M9,15.500 A6,6 0 0 1 15,9.500"/></g><circle cx="14" cy="14.800" r="1.500" fill="#fff"/></svg>
<svg class="a" style="left:1782px;top:1051px;" width="20" height="18" viewBox="0 0 20 18"><g fill="none" stroke="#fff" stroke-width="1.200" stroke-linejoin="round" stroke-linecap="round"><path d="M1.500,6.500 H4 L8,3 V15 L4,11.500 H1.500 Z"/><path d="M10.500,6.500 a3.500,3.500 0 0 1 0,5 M12.800,4.500 a6.300,6.300 0 0 1 0,9 M15,2.500 a9,9 0 0 1 0,13"/></g></svg>
<span class="t" id="t111" style="left:1811.8px;top:1044.67px;font-size:12.5px;color:#fff;transform:scaleX(0.8939);transform-origin:0 50%;">11:13 PM</span>
<span class="t" id="t112" style="left:1809.5px;top:1062.67px;font-size:12.5px;color:#fff;transform:scaleX(0.9261);transform-origin:0 50%;">7/20/2025</span>
<svg class="a" style="left:1878px;top:1049px;" width="20" height="18" viewBox="0 0 20 18"><path d="M1.500,1.500 H17 V13 H6.500 L3.500,16 V13 H1.500 Z" fill="#fff"/><path d="M4.500,5 H14 M4.500,7.800 H14 M4.500,10.600 H11" stroke="#25251e" stroke-width="1.100"/></svg>
<div class="a" style="left:1886.5px;top:1059.5px;width:16px;height:16px;background:#25231f;border:1.200px solid #bdbdbd;border-radius:8px;"></div>
<span class="t" id="t113" style="left:1891.3px;top:1062.66px;font-size:11px;color:#fff;font-weight:700;transform:scaleX(1.0612);transform-origin:0 50%;">2</span>
<div class="a" style="left:1914.5px;top:1040px;width:1px;height:40px;background:#6a6a64;"></div></body></html>
